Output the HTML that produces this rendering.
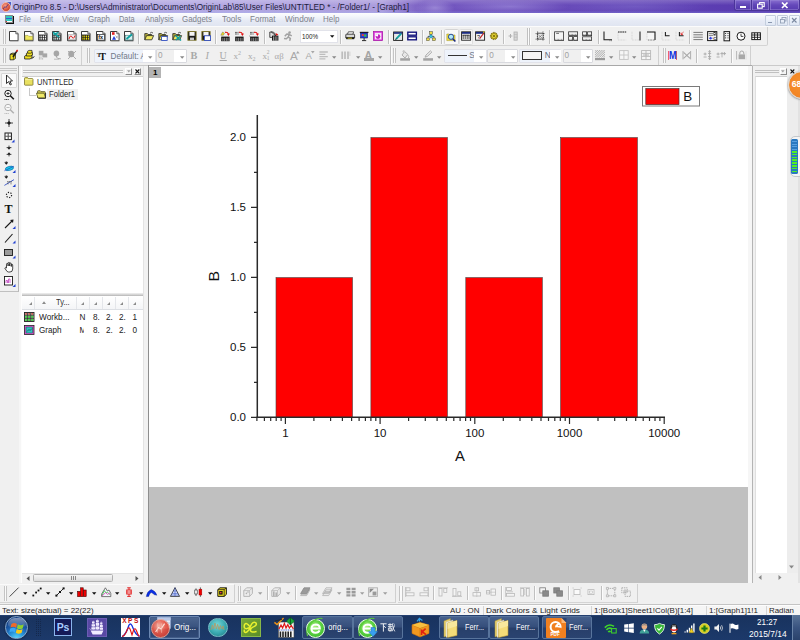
<!DOCTYPE html>
<html>
<head>
<meta charset="utf-8">
<title>OriginPro 8.5</title>
<style>
*{box-sizing:border-box;margin:0;padding:0}
html,body{width:800px;height:640px;overflow:hidden;background:#f0f0f0;font-family:"Liberation Sans",sans-serif;font-size:8px;color:#222}
.a{position:absolute}
.t{position:absolute;white-space:nowrap;transform-origin:0 0}
#title{left:0;top:0;width:800px;height:13px;background:linear-gradient(90deg,#7a66c6 0%,#7c66c8 30%,#7458c0 52%,#6a4cba 65%,#5e40b4 85%,#5636ac 100%)}
#menu{left:0;top:13px;width:800px;height:13.5px;background:linear-gradient(180deg,#fdfdfe 0%,#f4f6fb 25%,#e6eaf5 60%,#e0e5f1 100%);border-bottom:1px solid #cfd3dc}
.sep{position:absolute;width:1px;background:#c2c2c2}
svg{position:absolute;overflow:visible}
</style>
</head>
<body>
<div id="title" class="a"></div>
<div class="a" style="left:0px;top:0px;width:425px;height:13px;background:linear-gradient(90deg,rgba(225,222,248,0.6) 0%,rgba(225,222,248,0.5) 90%,rgba(225,222,248,0) 100%);"></div>
<div class="a" style="left:415px;top:0px;width:40px;height:13px;background:radial-gradient(ellipse at 50% 60%,rgba(200,190,240,0.45),rgba(200,190,240,0) 70%);"></div>
<div class="a" style="left:450px;top:0px;width:120px;height:13px;background:radial-gradient(ellipse at 50% 50%,rgba(190,180,240,0.4),rgba(200,190,240,0) 70%);"></div>
<div class="a" style="left:560px;top:0px;width:150px;height:13px;background:radial-gradient(ellipse at 50% 50%,rgba(150,140,220,0.3),rgba(200,190,240,0) 70%);"></div>
<div class="a" style="left:0px;top:0px;width:800px;height:13px;background:linear-gradient(180deg,rgba(255,255,255,0.22) 0%,rgba(255,255,255,0) 40%,rgba(255,255,255,0) 80%,rgba(160,190,255,0.25) 100%);"></div>
<div class="t" id="ttl" style="left:13px;top:2.2px;font-size:8.3px;line-height:10.3px;color:#1c1c3c;transform:scaleX(0.986);">OriginPro 8.5 - D:\Users\Administrator\Documents\OriginLab\85\User Files\UNTITLED * - /Folder1/ - [Graph1]</div>
<div class="a" style="left:5px;top:1px;width:7px;height:8px;background:#4a5ec8;border:1px solid #c8d0f0;"></div>
<div class="a" style="left:0.5px;top:1.5px;width:10px;height:10px;background:radial-gradient(circle at 40% 35%,#f8a088,#d85038 60%,#b03020);border-radius:5px;border:0.5px solid #f0b8a8;"></div>
<svg style="left:2px;top:3px;" width="7" height="7" viewBox="0 0 7 7"><path d="M1 6 L3 3.6 L4 4.6 L6 1.4" stroke="#503080" stroke-width="0.8" fill="none"/></svg>
<div class="a" style="left:733.5px;top:0px;width:18px;height:10.5px;background:linear-gradient(180deg,#8068cc,#5e44b6 50%,#5438ac);border:1px solid #4a3498;border-top:0;border-radius:0 0 0 3px;box-shadow:inset 0 0 0 0.6px #9a88d8;"></div>
<div class="a" style="left:751.5px;top:0px;width:18px;height:10.5px;background:linear-gradient(180deg,#8068cc,#5e44b6 50%,#5438ac);border:1px solid #4a3498;border-top:0;border-left:0;box-shadow:inset 0 0 0 0.6px #9a88d8;"></div>
<div class="a" style="left:769.5px;top:0px;width:30px;height:10.5px;background:linear-gradient(180deg,#8a70d0,#6448ba 50%,#583cb0);border:1px solid #4a3498;border-top:0;border-left:0;border-radius:0 0 3px 0;box-shadow:inset 0 0 0 0.6px #9a88d8;"></div>
<div class="a" style="left:739.5px;top:5.6px;width:6.5px;height:2px;background:#fff;"></div>
<svg style="left:756.5px;top:1.8px;" width="8" height="7" viewBox="0 0 8 7"><rect x="2.6" y="0.6" width="4.6" height="4" fill="none" stroke="#fff" stroke-width="1.1"/><rect x="0.6" y="2.2" width="4.6" height="4" fill="#6448ba" stroke="#fff" stroke-width="1.1"/></svg>
<svg style="left:780.5px;top:2px;" width="8" height="7" viewBox="0 0 8 7"><path d="M1 0.5 L6.5 6 M6.5 0.5 L1 6" stroke="#fff" stroke-width="1.7"/></svg>
<div id="menu" class="a"></div>
<div class="t" id="m_File" style="left:18.8px;top:15.2px;font-size:8.2px;line-height:10.2px;color:#7e828c;transform:scaleX(0.8862);">File</div>
<div class="t" id="m_Edit" style="left:40px;top:15.2px;font-size:8.2px;line-height:10.2px;color:#7e828c;transform:scaleX(0.9214);">Edit</div>
<div class="t" id="m_View" style="left:62px;top:15.2px;font-size:8.2px;line-height:10.2px;color:#7e828c;transform:scaleX(0.954);">View</div>
<div class="t" id="m_Graph" style="left:88px;top:15.2px;font-size:8.2px;line-height:10.2px;color:#7e828c;transform:scaleX(0.9664);">Graph</div>
<div class="t" id="m_Data" style="left:119.3px;top:15.2px;font-size:8.2px;line-height:10.2px;color:#7e828c;transform:scaleX(0.9077);">Data</div>
<div class="t" id="m_Analysis" style="left:144.5px;top:15.2px;font-size:8.2px;line-height:10.2px;color:#7e828c;transform:scaleX(0.9344);">Analysis</div>
<div class="t" id="m_Gadgets" style="left:182px;top:15.2px;font-size:8.2px;line-height:10.2px;color:#7e828c;transform:scaleX(0.9692);">Gadgets</div>
<div class="t" id="m_Tools" style="left:222px;top:15.2px;font-size:8.2px;line-height:10.2px;color:#7e828c;transform:scaleX(1.0092);">Tools</div>
<div class="t" id="m_Format" style="left:250px;top:15.2px;font-size:8.2px;line-height:10.2px;color:#7e828c;transform:scaleX(0.9831);">Format</div>
<div class="t" id="m_Window" style="left:284.5px;top:15.2px;font-size:8.2px;line-height:10.2px;color:#7e828c;transform:scaleX(1.006);">Window</div>
<div class="t" id="m_Help" style="left:322.5px;top:15.2px;font-size:8.2px;line-height:10.2px;color:#7e828c;transform:scaleX(0.9677);">Help</div>
<div class="a" style="left:5px;top:14.7px;width:8px;height:8px;background:#fff;border:0.6px solid #888;box-shadow:1px 1px 0 #111;"></div>
<div class="a" style="left:5.8px;top:15.8px;width:6.4px;height:2.2px;background:#30c8c0;"></div>
<div class="a" style="left:5.8px;top:19px;width:6.4px;height:2.4px;background:#30c8c0;"></div>
<div class="a" style="left:5.8px;top:18px;width:6.4px;height:1px;background:#3060d0;"></div>
<div class="a" style="left:5.8px;top:21.4px;width:1.6px;height:0.8px;background:#d03030;"></div>
<div class="a" style="left:765px;top:15px;width:11px;height:10.5px;background:linear-gradient(180deg,#f4f8fe,#dfe7f4);border:1px solid #c4cede;border-radius:1px;"></div>
<div class="a" style="left:777px;top:15px;width:11px;height:10.5px;background:linear-gradient(180deg,#f4f8fe,#dfe7f4);border:1px solid #c4cede;border-radius:1px;"></div>
<div class="a" style="left:789px;top:15px;width:11px;height:10.5px;background:linear-gradient(180deg,#f4f8fe,#dfe7f4);border:1px solid #c4cede;border-radius:1px;"></div>
<div class="a" style="left:768px;top:21.5px;width:4px;height:1.2px;background:#8a98b0;"></div>
<svg style="left:779.5px;top:17.3px;" width="7" height="7" viewBox="0 0 7 7"><rect x="2" y="0.5" width="4" height="3.5" fill="none" stroke="#8a98b0" stroke-width="0.8"/><rect x="0.5" y="2.5" width="4" height="3.5" fill="#e8eef8" stroke="#8a98b0" stroke-width="0.8"/></svg>
<svg style="left:791.3px;top:17.3px;" width="7" height="7" viewBox="0 0 7 7"><path d="M1 1 L5.5 5.5 M5.5 1 L1 5.5" stroke="#7a88a0" stroke-width="1.1"/></svg>
<div class="a" style="left:0px;top:26px;width:800px;height:1px;background:#fbfbfb;"></div>
<div class="a" style="left:0px;top:27px;width:767.5px;height:19px;background:#f0f0f0;border-right:1px solid #d0d0d0;border-bottom:1px solid #d4d4d4;border-radius:0 0 2px 0;"></div>
<div class="a" style="left:0px;top:46px;width:82px;height:19.5px;background:#f0f0f0;border-right:1px solid #d0d0d0;border-bottom:1px solid #d4d4d4;"></div>
<div class="a" style="left:84px;top:46px;width:307px;height:19.5px;background:#f0f0f0;border-right:1px solid #d0d0d0;border-bottom:1px solid #d4d4d4;"></div>
<div class="a" style="left:393px;top:46px;width:266px;height:19.5px;background:#f0f0f0;border-right:1px solid #d0d0d0;border-bottom:1px solid #d4d4d4;"></div>
<div class="a" style="left:661px;top:46px;width:90px;height:19.5px;background:#f0f0f0;border-right:1px solid #d0d0d0;border-bottom:1px solid #d4d4d4;"></div>
<div class="a" style="left:2.5px;top:29px;width:1px;height:15px;background:#c4c4c4;"></div>
<div class="a" style="left:5.0px;top:29px;width:1px;height:15px;background:#c4c4c4;"></div>
<div class="a" style="left:3.5px;top:29px;width:1.5px;height:15px;background:#fafafa;"></div>
<div class="a" style="left:2.5px;top:48px;width:1px;height:15px;background:#c4c4c4;"></div>
<div class="a" style="left:5.0px;top:48px;width:1px;height:15px;background:#c4c4c4;"></div>
<div class="a" style="left:3.5px;top:48px;width:1.5px;height:15px;background:#fafafa;"></div>
<svg style="left:8.8px;top:31.3px;" width="10" height="10" viewBox="0 0 10 10"><path d="M0.5 0.5 H6.8 L9.1 2.8 V9.7 H0.5 Z" fill="#fff" stroke="#1a1a1a" stroke-width="0.85"/><path d="M6.8 0.5 V2.8 H9.1" fill="#ddd" stroke="#1a1a1a" stroke-width="0.6"/><path d="M9.6 3.4 V10.1 H1.2" stroke="#9a9a9a" stroke-width="0.5" fill="none"/></svg>
<svg style="left:23.5px;top:31.3px;" width="10" height="10" viewBox="0 0 10 10"><path d="M0.5 0.5 H6.8 L9.1 2.8 V9.7 H0.5 Z" fill="#fff" stroke="#1a1a1a" stroke-width="0.85"/><path d="M6.8 0.5 V2.8 H9.1" fill="#ddd" stroke="#1a1a1a" stroke-width="0.6"/><path d="M9.6 3.4 V10.1 H1.2" stroke="#9a9a9a" stroke-width="0.5" fill="none"/><path d="M1.2 4.4 H4 L4.8 5.3 H8.6 V9 H1.2 Z" fill="#f0e860" stroke="#8a8420" stroke-width="0.5"/></svg>
<svg style="left:38px;top:31.3px;" width="10" height="10" viewBox="0 0 10 10"><path d="M0.5 0.5 H6.8 L9.1 2.8 V9.7 H0.5 Z" fill="#fff" stroke="#1a1a1a" stroke-width="0.85"/><path d="M6.8 0.5 V2.8 H9.1" fill="#ddd" stroke="#1a1a1a" stroke-width="0.6"/><path d="M9.6 3.4 V10.1 H1.2" stroke="#9a9a9a" stroke-width="0.5" fill="none"/><rect x="1" y="3.6" width="7.699999999999999" height="5.700000000000001" fill="#151515"/><rect x="1.45" y="4.50" width="1.05" height="1.75" fill="#fff"/><rect x="1.45" y="6.75" width="1.05" height="1.95" fill="#fff"/><rect x="3.25" y="4.50" width="1.05" height="1.75" fill="#fff"/><rect x="3.25" y="6.75" width="1.05" height="1.95" fill="#fff"/><rect x="5.05" y="4.50" width="1.05" height="1.75" fill="#fff"/><rect x="5.05" y="6.75" width="1.05" height="1.95" fill="#fff"/><rect x="6.85" y="4.50" width="1.05" height="1.75" fill="#fff"/><rect x="6.85" y="6.75" width="1.05" height="1.95" fill="#fff"/></svg>
<svg style="left:52.3px;top:31.3px;" width="10" height="10" viewBox="0 0 10 10"><path d="M0.5 0.5 H6.8 L9.1 2.8 V9.7 H0.5 Z" fill="#fff" stroke="#1a1a1a" stroke-width="0.85"/><path d="M6.8 0.5 V2.8 H9.1" fill="#ddd" stroke="#1a1a1a" stroke-width="0.6"/><path d="M9.6 3.4 V10.1 H1.2" stroke="#9a9a9a" stroke-width="0.5" fill="none"/><rect x="1" y="3.6" width="7.699999999999999" height="5.700000000000001" fill="#252525"/><rect x="1.45" y="4.50" width="1.05" height="1.75" fill="#d8eeee"/><rect x="1.45" y="6.75" width="1.05" height="1.95" fill="#d8eeee"/><rect x="3.25" y="4.50" width="1.05" height="1.75" fill="#d8eeee"/><rect x="3.25" y="6.75" width="1.05" height="1.95" fill="#d8eeee"/><rect x="5.05" y="4.50" width="1.05" height="1.75" fill="#d8eeee"/><rect x="5.05" y="6.75" width="1.05" height="1.95" fill="#d8eeee"/><rect x="6.85" y="4.50" width="1.05" height="1.75" fill="#d8eeee"/><rect x="6.85" y="6.75" width="1.05" height="1.95" fill="#d8eeee"/><path d="M1 1.2 L7 6.2 M1.5 3.5 L6.5 1.5" stroke="#10a0a0" stroke-width="1.6"/></svg>
<svg style="left:66.5px;top:31.3px;" width="10" height="10" viewBox="0 0 10 10"><path d="M0.5 0.5 H6.8 L9.1 2.8 V9.7 H0.5 Z" fill="#fff" stroke="#1a1a1a" stroke-width="0.85"/><path d="M6.8 0.5 V2.8 H9.1" fill="#ddd" stroke="#1a1a1a" stroke-width="0.6"/><path d="M9.6 3.4 V10.1 H1.2" stroke="#9a9a9a" stroke-width="0.5" fill="none"/><rect x="1.6" y="3.8" width="6.6" height="5" fill="#f0f0f0" stroke="#888" stroke-width="0.5"/><path d="M2 8 Q3.5 3 5 6 T8 4.5" stroke="#e02020" stroke-width="1" fill="none"/></svg>
<svg style="left:81px;top:31.3px;" width="10" height="10" viewBox="0 0 10 10"><path d="M0.5 0.5 H6.8 L9.1 2.8 V9.7 H0.5 Z" fill="#fff" stroke="#1a1a1a" stroke-width="0.85"/><path d="M6.8 0.5 V2.8 H9.1" fill="#ddd" stroke="#1a1a1a" stroke-width="0.6"/><path d="M9.6 3.4 V10.1 H1.2" stroke="#9a9a9a" stroke-width="0.5" fill="none"/><rect x="1" y="3.6" width="7.699999999999999" height="5.700000000000001" fill="#151515"/><rect x="1.45" y="4.50" width="1.05" height="1.75" fill="#f4e418"/><rect x="1.45" y="6.75" width="1.05" height="1.95" fill="#f4e418"/><rect x="3.25" y="4.50" width="1.05" height="1.75" fill="#f4e418"/><rect x="3.25" y="6.75" width="1.05" height="1.95" fill="#f4e418"/><rect x="5.05" y="4.50" width="1.05" height="1.75" fill="#f4e418"/><rect x="5.05" y="6.75" width="1.05" height="1.95" fill="#f4e418"/><rect x="6.85" y="4.50" width="1.05" height="1.75" fill="#f4e418"/><rect x="6.85" y="6.75" width="1.05" height="1.95" fill="#f4e418"/></svg>
<svg style="left:95.5px;top:31.3px;" width="10" height="10" viewBox="0 0 10 10"><path d="M0.5 0.5 H6.8 L9.1 2.8 V9.7 H0.5 Z" fill="#fff" stroke="#1a1a1a" stroke-width="0.85"/><path d="M6.8 0.5 V2.8 H9.1" fill="#ddd" stroke="#1a1a1a" stroke-width="0.6"/><path d="M9.6 3.4 V10.1 H1.2" stroke="#9a9a9a" stroke-width="0.5" fill="none"/><rect x="1.5" y="3.5" width="7" height="5.6" fill="#fff" stroke="#222" stroke-width="0.7"/><text x="2.2" y="8.3" font-size="5.5" font-weight="bold" font-family="Liberation Sans" fill="#111">fx</text></svg>
<svg style="left:110px;top:31.3px;" width="10" height="10" viewBox="0 0 10 10"><path d="M0.5 0.5 H6.8 L9.1 2.8 V9.7 H0.5 Z" fill="#fff" stroke="#1a1a1a" stroke-width="0.85"/><path d="M6.8 0.5 V2.8 H9.1" fill="#ddd" stroke="#1a1a1a" stroke-width="0.6"/><path d="M9.6 3.4 V10.1 H1.2" stroke="#9a9a9a" stroke-width="0.5" fill="none"/><rect x="2" y="1.2" width="2.6" height="2.6" fill="#e02020"/><path d="M2 8.8 L4 5 L6 8.8 Z" fill="#2040e0"/><path d="M5.5 4.5 L8 7.5 M8 4.5 L5.5 7.5" stroke="#888" stroke-width="0.6"/></svg>
<svg style="left:124.3px;top:31.3px;" width="10" height="10" viewBox="0 0 10 10"><path d="M0.5 0.5 H6.8 L9.1 2.8 V9.7 H0.5 Z" fill="#fff" stroke="#1a1a1a" stroke-width="0.85"/><path d="M6.8 0.5 V2.8 H9.1" fill="#ddd" stroke="#1a1a1a" stroke-width="0.6"/><path d="M9.6 3.4 V10.1 H1.2" stroke="#9a9a9a" stroke-width="0.5" fill="none"/><rect x="1.5" y="4.2" width="7" height="4.8" fill="#d8f0f0" stroke="#206060" stroke-width="0.5"/><path d="M2.5 8 L8 3.2" stroke="#10a0a0" stroke-width="1.8"/></svg>
<div class="a" style="left:138.2px;top:29.5px;width:1px;height:14px;background:#c0c0c0;"></div>
<div class="a" style="left:139.2px;top:29.5px;width:1px;height:14px;background:#fcfcfc;"></div>
<svg style="left:143.7px;top:31.3px;" width="10" height="10" viewBox="0 0 10 10"><path d="M0.8 8.8 V2.6 H3.4 L4.2 3.5 H7.6 V4.6" fill="#b8b040" stroke="#222" stroke-width="0.8"/><path d="M0.8 8.8 L2.6 4.6 H9.6 L7.8 8.8 Z" fill="#f0e860" stroke="#222" stroke-width="0.8"/><path d="M6 2.2 Q7.5 0.6 9 2" stroke="#222" stroke-width="0.7" fill="none"/></svg>
<svg style="left:158px;top:31.3px;" width="10" height="10" viewBox="0 0 10 10"><path d="M0.8 8.8 V2.6 H3.4 L4.2 3.5 H7.6 V4.6" fill="#b8b040" stroke="#222" stroke-width="0.8"/><path d="M0.8 8.8 L2.6 4.6 H9.6 L7.8 8.8 Z" fill="#f0e860" stroke="#222" stroke-width="0.8"/><path d="M6 2.2 Q7.5 0.6 9 2" stroke="#222" stroke-width="0.7" fill="none"/><rect x="3.6" y="5.6" width="5.6" height="3.8" fill="#fff" stroke="#2040c0" stroke-width="0.8"/></svg>
<svg style="left:172.3px;top:31.3px;" width="10" height="10" viewBox="0 0 10 10"><path d="M0.8 8.8 V2.6 H3.4 L4.2 3.5 H7.6 V4.6" fill="#b8b040" stroke="#222" stroke-width="0.8"/><path d="M0.8 8.8 L2.6 4.6 H9.6 L7.8 8.8 Z" fill="#f0e860" stroke="#222" stroke-width="0.8"/><path d="M6 2.2 Q7.5 0.6 9 2" stroke="#222" stroke-width="0.7" fill="none"/><path d="M3.5 4.5 L9 9.5 M4 9 L8.5 5" stroke="#10a0a0" stroke-width="1.6"/></svg>
<svg style="left:187px;top:31.3px;" width="10" height="10" viewBox="0 0 10 10"><rect x="0.9" y="0.6" width="8.2" height="8.6" fill="#1a1a1a" stroke="#7a7020" stroke-width="0.9"/><rect x="2.4" y="1" width="5.2" height="3.8" fill="#f4f4f4"/><rect x="3" y="6.6" width="4" height="2.6" fill="#c8c8c8"/></svg>
<svg style="left:201px;top:31.3px;" width="10" height="10" viewBox="0 0 10 10"><rect x="0.9" y="0.6" width="8.2" height="8.6" fill="#1a1a1a" stroke="#7a7020" stroke-width="0.9"/><rect x="2.4" y="1" width="5.2" height="3.8" fill="#f4f4f4"/><rect x="3" y="6.6" width="4" height="2.6" fill="#c8c8c8"/><rect x="3.4" y="4.8" width="6.2" height="4.6" fill="#fff" stroke="#2040c0" stroke-width="0.8"/></svg>
<div class="a" style="left:215.3px;top:29.5px;width:1px;height:14px;background:#c0c0c0;"></div>
<div class="a" style="left:216.3px;top:29.5px;width:1px;height:14px;background:#fcfcfc;"></div>
<svg style="left:220px;top:31.3px;" width="10" height="10" viewBox="0 0 10 10"><path d="M0.8 4.2 L2.6 1 L4.4 2.2 L3.4 4.2Z" fill="#f0e020" stroke="#555" stroke-width="0.4"/><path d="M5 1.4 Q7.6 0.8 8.4 3" stroke="#e01010" stroke-width="1.1" fill="none"/><path d="M10 2.6 L8.4 5 L7 2.8 Z" fill="#e01010"/><rect x="1.2" y="5.6" width="8.4" height="4.6" fill="#151515"/><path d="M2.9 6.8 V10.2 M4.6 6.8 V10.2 M6.3 6.8 V10.2 M8 6.8 V10.2" stroke="#e8e8e8" stroke-width="0.55"/></svg>
<svg style="left:234.3px;top:31.3px;" width="10" height="10" viewBox="0 0 10 10"><path d="M1 1.4 H5 M1 3 H5" stroke="#222" stroke-width="0.9" stroke-dasharray="0.8 0.5"/><path d="M5 1.4 Q7.6 0.8 8.4 3" stroke="#e01010" stroke-width="1.1" fill="none"/><path d="M10 2.6 L8.4 5 L7 2.8 Z" fill="#e01010"/><rect x="1.2" y="5.6" width="8.4" height="4.6" fill="#151515"/><path d="M2.9 6.8 V10.2 M4.6 6.8 V10.2 M6.3 6.8 V10.2 M8 6.8 V10.2" stroke="#e8e8e8" stroke-width="0.55"/></svg>
<svg style="left:248.6px;top:31.3px;" width="10" height="10" viewBox="0 0 10 10"><path d="M1 1.4 H5 M1 3 H5" stroke="#222" stroke-width="0.9" stroke-dasharray="0.8 0.5"/><path d="M0.5 4.5 L3 9.5" stroke="#888" stroke-width="0.7"/><path d="M5 1.4 Q7.6 0.8 8.4 3" stroke="#e01010" stroke-width="1.1" fill="none"/><path d="M10 2.6 L8.4 5 L7 2.8 Z" fill="#e01010"/><rect x="1.2" y="5.6" width="8.4" height="4.6" fill="#151515"/><path d="M2.9 6.8 V10.2 M4.6 6.8 V10.2 M6.3 6.8 V10.2 M8 6.8 V10.2" stroke="#e8e8e8" stroke-width="0.55"/></svg>
<div class="a" style="left:263.5px;top:29.5px;width:1px;height:14px;background:#c0c0c0;"></div>
<div class="a" style="left:264.5px;top:29.5px;width:1px;height:14px;background:#fcfcfc;"></div>
<svg style="left:268.8px;top:31.3px;" width="10" height="10" viewBox="0 0 10 10"><path d="M0.8 1 H4.4 L6.2 3 V6.4 H0.8Z" fill="#e0e0e0" stroke="#222" stroke-width="0.8"/><path d="M2 0.6 L7 5" stroke="#222" stroke-width="0.8"/><rect x="3" y="4.6" width="6.4" height="5" fill="#1a1a1a"/><path d="M4.5 5.4 V9.6 M6.2 5.4 V9.6 M7.9 5.4 V9.6" stroke="#e8e8e8" stroke-width="0.6"/><path d="M6.6 2 L9.4 3.6 L7 4.8Z" fill="#e01010"/></svg>
<svg style="left:283px;top:31.3px;" width="10" height="10" viewBox="0 0 10 10"><circle cx="6.6" cy="1.5" r="1.3" fill="#a2a2a2"/><path d="M3 3.2 L6.2 3 L5.2 6.2 L7.4 7.4 L6.6 9.8 M5.2 6 L3.4 7.8 L1 7.4 M6 3.4 L8.8 4.8 M3.6 3.2 L1.8 5.2" stroke="#a2a2a2" stroke-width="1.5" fill="none" stroke-linejoin="round"/></svg>
<div class="a" style="left:299.5px;top:30px;width:38px;height:12.5px;background:#fff;border:1px solid #e2e3ea;"></div>
<div class="t" id="t_100" style="left:302px;top:31.6px;font-size:8px;line-height:10px;color:#222;transform:scaleX(0.7817);">100%</div>
<svg style="left:329.5px;top:35.3px;" width="4" height="3" viewBox="0 0 4 3"><path d="M0 0.2 H4.4 L2.2 2.8 Z" fill="#111"/></svg>
<div class="a" style="left:340.3px;top:29.5px;width:1px;height:14px;background:#c0c0c0;"></div>
<div class="a" style="left:341.3px;top:29.5px;width:1px;height:14px;background:#fcfcfc;"></div>
<svg style="left:344.8px;top:31.3px;" width="10" height="10" viewBox="0 0 10 10"><path d="M2.4 3.4 L3.4 0.8 H8.6 L7.8 3.4" fill="#fff" stroke="#222" stroke-width="0.7"/><path d="M0.8 3.8 Q0.8 3.2 1.4 3.2 H8.8 Q9.6 3.2 9.6 3.8 V7 H0.8Z" fill="#d8d8d8" stroke="#1a1a1a" stroke-width="0.8"/><rect x="1.2" y="6.2" width="8" height="2" fill="#1a1a1a"/><path d="M2.6 7.2 H7" stroke="#f0e020" stroke-width="0.8"/></svg>
<svg style="left:359px;top:31.3px;" width="10" height="10" viewBox="0 0 10 10"><rect x="0.8" y="0.8" width="8.6" height="1.2" fill="#1a1a1a"/><rect x="1.6" y="2" width="7" height="5" fill="#2040e0" stroke="#1a1a60" stroke-width="0.6"/><rect x="2.8" y="3" width="2" height="2" fill="#e04040"/><rect x="5.2" y="3.4" width="2.2" height="2.4" fill="#40c040"/><path d="M5.1 7 V9.4 M3 9.6 H7.2" stroke="#1a1a1a" stroke-width="0.9"/></svg>
<svg style="left:373.3px;top:31.3px;" width="10" height="10" viewBox="0 0 10 10"><rect x="0.6" y="0.6" width="9" height="9" fill="#e030e0" stroke="#a010a0" stroke-width="0.7"/><rect x="1.8" y="1.8" width="6.6" height="6.6" fill="#f4e8f4"/><circle cx="5" cy="5.6" r="2.3" fill="#c020c0"/><path d="M5 5.6 L5 3 A2.6 2.6 0 0 0 2.6 5Z" fill="#fff"/></svg>
<div class="a" style="left:387.5px;top:29.5px;width:1px;height:14px;background:#c0c0c0;"></div>
<div class="a" style="left:388.5px;top:29.5px;width:1px;height:14px;background:#fcfcfc;"></div>
<svg style="left:392.5px;top:31.3px;" width="10" height="10" viewBox="0 0 10 10"><rect x="0.6" y="1" width="9" height="8.4" fill="#e8e8e8" stroke="#1a1a1a" stroke-width="0.9"/><rect x="1" y="1.2" width="8.2" height="1.6" fill="#1a2a80"/><path d="M3 8.2 L8.2 2.6" stroke="#10a0a0" stroke-width="1.8"/><path d="M2.4 8.8 L3.6 7.6" stroke="#222" stroke-width="1"/></svg>
<svg style="left:407px;top:31.3px;" width="10" height="10" viewBox="0 0 10 10"><rect x="0.8" y="1.2" width="8.6" height="3" fill="#fff" stroke="#10107a" stroke-width="1.35"/><rect x="0.8" y="5.8" width="8.6" height="3" fill="#fff" stroke="#10107a" stroke-width="1.35"/></svg>
<div class="a" style="left:422.3px;top:29.5px;width:1px;height:14px;background:#c0c0c0;"></div>
<div class="a" style="left:423.3px;top:29.5px;width:1px;height:14px;background:#fcfcfc;"></div>
<svg style="left:426.3px;top:31.3px;" width="10" height="10" viewBox="0 0 10 10"><path d="M5 3 V5 M2 7 V5.4 H8 V7" stroke="#222" stroke-width="0.7" fill="none"/><rect x="3.6" y="0.6" width="2.8" height="2.6" fill="#f0e040" stroke="#444" stroke-width="0.5"/><path d="M5 3.6 L7 5.4 L5 7.2 L3 5.4Z" fill="#30c8e0" stroke="#206080" stroke-width="0.5"/><rect x="0.6" y="7" width="2.8" height="2.6" fill="#f0e040" stroke="#444" stroke-width="0.5"/><rect x="6.6" y="7" width="2.8" height="2.6" fill="#f0e040" stroke="#444" stroke-width="0.5"/></svg>
<div class="a" style="left:441px;top:29.5px;width:1px;height:14px;background:#c0c0c0;"></div>
<div class="a" style="left:442px;top:29.5px;width:1px;height:14px;background:#fcfcfc;"></div>
<div class="a" style="left:443.5px;top:28.5px;width:15px;height:16px;background:#f8f8f8;border:1px solid #d4d4d4;border-radius:1.5px;"></div>
<div class="a" style="left:459px;top:28.5px;width:14px;height:16px;background:#f6f6f6;border:1px solid #dedede;border-radius:1.5px;"></div>
<svg style="left:446px;top:31.8px;" width="10" height="10" viewBox="0 0 10 10"><path d="M0.8 2 H3.2 L4 3 H9 V8.6 H0.8Z" fill="#f0e040" stroke="#a09020" stroke-width="0.5"/><circle cx="5" cy="4.8" r="2.6" fill="#b0e8f8" stroke="#1a3a90" stroke-width="0.9"/><path d="M6.8 6.8 L9.4 9.6" stroke="#1a2a80" stroke-width="1.5"/></svg>
<svg style="left:461px;top:31.3px;" width="10" height="10" viewBox="0 0 10 10"><rect x="0.6" y="0.8" width="9" height="8.4" fill="#f4f4f4" stroke="#1a1a1a" stroke-width="0.9"/><rect x="1" y="1" width="8.2" height="1.8" fill="#1a2a80"/><path d="M2.2 4 V8 M4.2 4 V8 M6.2 4 V8 M8 4 V8 M1.5 4.2 H8.6" stroke="#222" stroke-width="0.8"/></svg>
<svg style="left:474.5px;top:31.3px;" width="10" height="10" viewBox="0 0 10 10"><rect x="0.6" y="0.8" width="9" height="8.4" fill="#f4f4f4" stroke="#1a1a1a" stroke-width="0.9"/><rect x="1" y="1" width="8.2" height="1.8" fill="#1a2a80"/><text x="2" y="8.2" font-size="5.5" font-family="Liberation Sans" fill="#111">?</text><path d="M4.6 7.6 L8.8 2.2" stroke="#c02020" stroke-width="1.1"/><path d="M8.2 1.6 L9.6 0.6" stroke="#e0c020" stroke-width="1.2"/></svg>
<svg style="left:489px;top:31.3px;" width="10" height="10" viewBox="0 0 10 10"><circle cx="5" cy="5" r="3.6" fill="#d8c828" stroke="#5a5010" stroke-width="0.9" stroke-dasharray="1.6 1"/><circle cx="5" cy="5" r="2.7" fill="#e0d030" stroke="#7a6a10" stroke-width="0.6"/><circle cx="5" cy="5" r="1.1" fill="#7a6a10"/></svg>
<div class="a" style="left:503px;top:29.5px;width:1px;height:14px;background:#c0c0c0;"></div>
<div class="a" style="left:504px;top:29.5px;width:1px;height:14px;background:#fcfcfc;"></div>
<svg style="left:507.5px;top:31.3px;" width="10" height="10" viewBox="0 0 10 10"><path d="M0.6 5 H4.4 M2.5 3 V7" stroke="#b0b0b0" stroke-width="1"/><rect x="6" y="1" width="3.2" height="8.2" fill="#d8d8d8" stroke="#b0b0b0" stroke-width="0.8"/><path d="M6 3.6 H9.2 M6 6.2 H9.2" stroke="#b0b0b0" stroke-width="0.6"/></svg>
<div class="a" style="left:526.8px;top:28px;width:1px;height:17px;background:#c0c0c0;"></div>
<div class="a" style="left:527.8px;top:28px;width:1px;height:17px;background:#fcfcfc;"></div>
<div class="a" style="left:529.3px;top:28px;width:1px;height:17px;background:#c0c0c0;"></div>
<div class="a" style="left:530.3px;top:28px;width:1px;height:17px;background:#fcfcfc;"></div>
<svg style="left:534.5px;top:31.3px;" width="10" height="10" viewBox="0 0 10 10"><rect x="2.4" y="2" width="6" height="6" fill="none" stroke="#333" stroke-width="0.8" stroke-dasharray="1.2 0.8"/><path d="M0.4 2.6 H9.8 M0.4 8.2 H9.8 M2.6 0.2 V9.8 M8 0.2 V9.8" stroke="#333" stroke-width="0.5"/><path d="M3.5 4 L7 7 M7 4 L3.5 7" stroke="#555" stroke-width="0.6"/></svg>
<div class="a" style="left:549px;top:29.5px;width:1px;height:14px;background:#c0c0c0;"></div>
<div class="a" style="left:550px;top:29.5px;width:1px;height:14px;background:#fcfcfc;"></div>
<svg style="left:553.5px;top:31.3px;" width="10" height="10" viewBox="0 0 10 10"><rect x="0.6" y="0.8" width="9" height="8.6" fill="#f4f4f4" stroke="#333" stroke-width="0.8"/><path d="M1.4 8.4 H8.799999999999999" stroke="#333" stroke-width="0.6" stroke-dasharray="0.8 0.6"/><path d="M2.2 2.4 H5" stroke="#333" stroke-width="0.7"/></svg>
<svg style="left:568px;top:31.3px;" width="10" height="10" viewBox="0 0 10 10"><rect x="0.6" y="0.8" width="9" height="3.6" fill="#f4f4f4" stroke="#333" stroke-width="0.8"/><path d="M1.4 3.4000000000000004 H8.799999999999999" stroke="#333" stroke-width="0.6" stroke-dasharray="0.8 0.6"/><rect x="0.6" y="5.6" width="4" height="3.8" fill="#f4f4f4" stroke="#333" stroke-width="0.8"/><path d="M1.4 8.399999999999999 H3.8" stroke="#333" stroke-width="0.6" stroke-dasharray="0.8 0.6"/><rect x="5.6" y="5.6" width="4" height="3.8" fill="#f4f4f4" stroke="#333" stroke-width="0.8"/><path d="M6.3999999999999995 8.399999999999999 H8.799999999999999" stroke="#333" stroke-width="0.6" stroke-dasharray="0.8 0.6"/></svg>
<svg style="left:582.3px;top:31.3px;" width="10" height="10" viewBox="0 0 10 10"><rect x="0.6" y="0.8" width="4" height="3.8" fill="#f4f4f4" stroke="#333" stroke-width="0.8"/><path d="M1.4 3.5999999999999996 H3.8" stroke="#333" stroke-width="0.6" stroke-dasharray="0.8 0.6"/><rect x="5.6" y="0.8" width="4" height="3.8" fill="#f4f4f4" stroke="#333" stroke-width="0.8"/><path d="M6.3999999999999995 3.5999999999999996 H8.799999999999999" stroke="#333" stroke-width="0.6" stroke-dasharray="0.8 0.6"/><rect x="0.6" y="5.8" width="9" height="3.6" fill="#f4f4f4" stroke="#333" stroke-width="0.8"/><path d="M1.4 8.4 H8.799999999999999" stroke="#333" stroke-width="0.6" stroke-dasharray="0.8 0.6"/></svg>
<div class="a" style="left:597.5px;top:29.5px;width:1px;height:14px;background:#c0c0c0;"></div>
<div class="a" style="left:598.5px;top:29.5px;width:1px;height:14px;background:#fcfcfc;"></div>
<svg style="left:602.5px;top:31.3px;" width="10" height="10" viewBox="0 0 10 10"><path d="M1 0.6 V8.8 H9" stroke="#1a1a1a" stroke-width="1.05" fill="none"/><path d="M6.6 9.7 h2.6" stroke="#1a1a1a" stroke-width="0.6" stroke-dasharray="0.7 0.7"/></svg>
<svg style="left:617px;top:31.3px;" width="10" height="10" viewBox="0 0 10 10"><path d="M1 1 V9 H9.2" stroke="#cfcfcf" stroke-width="0.9" fill="none" stroke-dasharray="0.9 0.7"/><path d="M1 1 H9.2" stroke="#1a1a1a" stroke-width="1.05" stroke-dasharray="1.6 0.6"/></svg>
<svg style="left:631.3px;top:31.3px;" width="10" height="10" viewBox="0 0 10 10"><path d="M1 0.8 V9 H9" stroke="#cfcfcf" stroke-width="0.9" fill="none" stroke-dasharray="0.9 0.7"/><path d="M9 0.6 V9.4" stroke="#1a1a1a" stroke-width="1.05"/></svg>
<svg style="left:646px;top:31.3px;" width="10" height="10" viewBox="0 0 10 10"><rect x="1" y="1" width="8" height="8" fill="#f6f6f6" stroke="#cfcfcf" stroke-width="0.9" stroke-dasharray="0.9 0.7"/><path d="M1 1 H9 V9" stroke="#1a1a1a" stroke-width="1.05" fill="none"/><path d="M2.2 9 H9" stroke="#555" stroke-width="0.8" stroke-dasharray="0.8 0.8"/></svg>
<svg style="left:660.5px;top:31.3px;" width="10" height="10" viewBox="0 0 10 10"><path d="M1 0.8 V9 H9.2" stroke="#cfcfcf" stroke-width="0.9" fill="none" stroke-dasharray="0.9 0.7"/><path d="M4.4 1 V4.8 H8.6" stroke="#1a1a1a" stroke-width="1.05" fill="none"/></svg>
<svg style="left:675px;top:31.3px;" width="10" height="10" viewBox="0 0 10 10"><path d="M1 0.8 V9 H9.2" stroke="#cfcfcf" stroke-width="0.9" fill="none" stroke-dasharray="0.9 0.7"/><path d="M4.4 1 V4.8 H8.6" stroke="#1a1a1a" stroke-width="1.05" fill="none"/><path d="M8.6 1 L6 3.4 M6 1.6 V3.6 H8" stroke="#e01010" stroke-width="0.7" fill="none"/></svg>
<div class="a" style="left:689px;top:29.5px;width:1px;height:14px;background:#c0c0c0;"></div>
<div class="a" style="left:690px;top:29.5px;width:1px;height:14px;background:#fcfcfc;"></div>
<svg style="left:693.3px;top:31.3px;" width="10" height="10" viewBox="0 0 10 10"><path d="M0.4 1.4 H9.8 M0.4 3.8 H9.8 M0.4 6.2 H9.8 M0.4 8.6 H9.8" stroke="#7a7a7a" stroke-width="1"/></svg>
<svg style="left:707.3px;top:31.3px;" width="10" height="10" viewBox="0 0 10 10"><rect x="0.6" y="0.6" width="9.2" height="9" fill="#f4f4f4" stroke="#1a1a1a" stroke-width="1"/><path d="M1.8 2.6 H6 M1.8 4.4 H6" stroke="#555" stroke-width="0.7"/><rect x="6.8" y="1.6" width="1.8" height="2.6" fill="none" stroke="#333" stroke-width="0.6"/><path d="M2 7.2 H5.4 M3.7 5.8 V8.6" stroke="#2030e0" stroke-width="1"/><text x="6.2" y="9" font-size="4.4" font-weight="bold" font-family="Liberation Sans" fill="#111">C</text></svg>
<svg style="left:721.5px;top:31.3px;" width="10" height="10" viewBox="0 0 10 10"><rect x="2" y="0.6" width="5.6" height="9.2" fill="#f4f4f4" stroke="#1a1a1a" stroke-width="1"/><path d="M3.6 2 V8.4 M6 2 V8.4" stroke="#1a1a1a" stroke-width="0.9" stroke-dasharray="1 1.2"/></svg>
<svg style="left:736px;top:31.3px;" width="10" height="10" viewBox="0 0 10 10"><circle cx="5" cy="5.2" r="4" fill="#fff" stroke="#1a1a1a" stroke-width="1"/><path d="M5 2.6 V5.4 H7.4" stroke="#1a1a1a" stroke-width="0.8" fill="none"/></svg>
<svg style="left:750.5px;top:31.3px;" width="10" height="10" viewBox="0 0 10 10"><rect x="0.8" y="1.8" width="8.6" height="6.8" fill="#fff" stroke="#1a1a1a" stroke-width="1"/><path d="M0.8 4 H9.4 M0.8 6.3 H9.4 M3.6 1.8 V8.6 M6.5 1.8 V8.6" stroke="#1a1a1a" stroke-width="0.9"/></svg>
<svg style="left:9px;top:50.2px;" width="10" height="10" viewBox="0 0 10 10"><path d="M1 4.4 L3 3.2 H6.4 V8.6 L4.4 9.8 H1Z" fill="#f0e020" stroke="#1a1a1a" stroke-width="0.8"/><path d="M1 4.4 H4.4 V9.8 M4.4 4.4 L6.4 3.2" stroke="#1a1a1a" stroke-width="0.6" fill="none"/><path d="M4 7 L8 0.8" stroke="#1a1a1a" stroke-width="1.5"/><path d="M7.4 1.6 L8.6 0" stroke="#e01010" stroke-width="1.4"/></svg>
<svg style="left:23.5px;top:50.2px;" width="10" height="10" viewBox="0 0 10 10"><path d="M0.6 6.2 L2.6 5 H8 V7.6 L6 9 H0.6Z" fill="#f0e020" stroke="#1a1a1a" stroke-width="0.8"/><path d="M2.4 3.4 L4 2.4 H8.4 V5 L6.8 6 H2.4Z" fill="#f0e020" stroke="#1a1a1a" stroke-width="0.8"/><path d="M3.6 1.2 L5 0.4 H8 V2.4 L6.8 3.2 H3.6Z" fill="#f0e020" stroke="#1a1a1a" stroke-width="0.7"/><path d="M7.5 8.6 L10.4 6.6" stroke="#1a1a1a" stroke-width="1"/></svg>
<svg style="left:38px;top:50.2px;" width="10" height="10" viewBox="0 0 10 10"><rect x="0.8" y="0.8" width="4.6" height="4.6" fill="#a6a6a6"/><rect x="4.4" y="3.4" width="4.8" height="4" fill="#a6a6a6"/><path d="M1.4 6.4 V9.6 M3 6.4 V9.6 M4.6 8 V9.6" stroke="#a6a6a6" stroke-width="0.7"/></svg>
<svg style="left:52.3px;top:50.2px;" width="10" height="10" viewBox="0 0 10 10"><ellipse cx="4.4" cy="3.4" rx="2.8" ry="3" fill="#a6a6a6"/><path d="M4.4 6 Q4.4 9 8.8 8.8" stroke="#a6a6a6" stroke-width="1" fill="none"/><path d="M2 9.2 H7" stroke="#a6a6a6" stroke-width="0.7"/></svg>
<svg style="left:66.5px;top:50.2px;" width="10" height="10" viewBox="0 0 10 10"><ellipse cx="4.2" cy="4" rx="3" ry="3.2" fill="#a6a6a6"/><path d="M1 1 L9 9 M9 1 L1 9" stroke="#a6a6a6" stroke-width="0.9"/></svg>
<div class="a" style="left:86.5px;top:48px;width:1px;height:15px;background:#c4c4c4;"></div>
<div class="a" style="left:89.0px;top:48px;width:1px;height:15px;background:#c4c4c4;"></div>
<div class="a" style="left:87.5px;top:48px;width:1.5px;height:15px;background:#fafafa;"></div>
<div class="a" style="left:93.5px;top:49px;width:62px;height:14px;background:#fff;border:1px solid #e2e3ea;border-radius:1px;"></div>
<div class="a" style="left:94.5px;top:50px;width:49px;height:12px;background:#eef3fb;"></div>
<div class="t" style="left:99.6px;top:50.8px;font-family:'Liberation Serif',serif;font-weight:bold;font-size:9.6px;line-height:11px;color:#111">T</div>
<div class="t" style="left:96.8px;top:49.6px;font-family:'Liberation Serif',serif;font-weight:bold;font-size:7px;line-height:11px;color:#333">T</div>
<div class="t" id="t_def" style="left:110.5px;top:51.5px;font-size:8.2px;line-height:10.2px;color:#707888;">Default: A</div>
<div class="a" style="left:143.2px;top:50px;width:11.6px;height:12px;background:#fff;"></div>
<svg style="left:148px;top:55.5px;" width="4" height="3" viewBox="0 0 4 3"><path d="M0 0.2 H4.4 L2.2 2.8 Z" fill="#8a8a8a"/></svg>
<div class="a" style="left:156px;top:49px;width:30.5px;height:14px;background:#fff;border:1px solid #d8d9de;border-radius:1px;"></div>
<div class="a" style="left:157px;top:50px;width:17px;height:12px;background:#f0f0f0;"></div>
<div class="t" style="left:158px;top:51.3px;font-size:8.2px;line-height:10.2px;color:#a0a0a0;">0</div>
<svg style="left:179.5px;top:55.5px;" width="4" height="3" viewBox="0 0 4 3"><path d="M0 0.2 H4.4 L2.2 2.8 Z" fill="#8a8a8a"/></svg>
<div class="t" style="left:190.6px;top:51px;font-family:'Liberation Serif',serif;font-size:10.3px;line-height:10.3px;color:#a8a8a8;font-weight:bold;">B</div>
<div class="t" style="left:205.6px;top:51px;font-family:'Liberation Serif',serif;font-size:10.3px;line-height:10.3px;color:#a8a8a8;font-style:italic;">I</div>
<div class="t" style="left:219.6px;top:51px;font-family:'Liberation Serif',serif;font-size:10px;line-height:10px;color:#a8a8a8;text-decoration:underline;">U</div>
<div class="t" style="left:233.6px;top:52px;font-family:'Liberation Serif',serif;font-size:9px;line-height:9px;color:#a8a8a8;">x</div>
<div class="t" style="left:238px;top:50.3px;font-family:'Liberation Serif',serif;font-size:6px;line-height:6px;color:#a8a8a8;">2</div>
<div class="t" style="left:248px;top:52px;font-family:'Liberation Serif',serif;font-size:9px;line-height:9px;color:#a8a8a8;">x</div>
<div class="t" style="left:252.4px;top:56px;font-family:'Liberation Serif',serif;font-size:6px;line-height:6px;color:#a8a8a8;">2</div>
<div class="t" style="left:262.4px;top:52px;font-family:'Liberation Serif',serif;font-size:9px;line-height:9px;color:#a8a8a8;">x</div>
<div class="t" style="left:266.8px;top:50px;font-family:'Liberation Serif',serif;font-size:5.5px;line-height:5.5px;color:#a8a8a8;">2</div>
<div class="t" style="left:266.8px;top:55.6px;font-family:'Liberation Serif',serif;font-size:5.5px;line-height:5.5px;color:#a8a8a8;">1</div>
<div class="t" style="left:274.6px;top:52.3px;font-family:'Liberation Serif',serif;font-size:8.8px;line-height:8.8px;color:#a8a8a8;">αβ</div>
<div class="t" style="left:290px;top:50.3px;font-size:11.6px;line-height:12px;color:#a8a8a8">A</div>
<svg style="left:296.3px;top:51px;" width="4" height="3" viewBox="0 0 4 3"><path d="M0 2.6 H3.6 L1.8 0 Z" fill="#a8a8a8"/></svg>
<div class="t" style="left:305.5px;top:50.8px;font-size:9.5px;line-height:10px;color:#a8a8a8">A</div>
<svg style="left:310.8px;top:50.6px;" width="4" height="3" viewBox="0 0 4 3"><path d="M0 0 H3.6 L1.8 2.4 Z" fill="#a8a8a8"/></svg>
<svg style="left:318.8px;top:50.2px;" width="10" height="10" viewBox="0 0 10 10"><path d="M0.4 2 H8.8 M0.4 4.3 H6.4 M0.4 6.6 H8.8 M0.4 8.9 H6.4" stroke="#bdbdbd" stroke-width="1.3"/></svg>
<svg style="left:332px;top:55.5px;" width="4" height="3" viewBox="0 0 4 3"><path d="M0 0.2 H4.4 L2.2 2.8 Z" fill="#8a8a8a"/></svg>
<svg style="left:341px;top:50.2px;" width="10" height="10" viewBox="0 0 10 10"><path d="M1.2 1.6 V9 M4 1.6 V9 M7 1.6 V9" stroke="#bdbdbd" stroke-width="1.7"/><path d="M8.9 1.6 V6" stroke="#cfcfcf" stroke-width="0.9"/></svg>
<svg style="left:355.5px;top:55.5px;" width="4" height="3" viewBox="0 0 4 3"><path d="M0 0.2 H4.4 L2.2 2.8 Z" fill="#8a8a8a"/></svg>
<div class="t" style="left:364.6px;top:48.8px;font-size:10.6px;line-height:12px;font-weight:bold;color:#a4a4a4">A</div>
<div class="a" style="left:363.6px;top:58.4px;width:10.2px;height:2.6px;background:#a6a6a6;"></div>
<svg style="left:378px;top:55.5px;" width="4" height="3" viewBox="0 0 4 3"><path d="M0 0.2 H4.4 L2.2 2.8 Z" fill="#8a8a8a"/></svg>
<div class="a" style="left:389.5px;top:47px;width:1px;height:17px;background:#c0c0c0;"></div>
<div class="a" style="left:390.5px;top:47px;width:1px;height:17px;background:#fcfcfc;"></div>
<div class="a" style="left:392.8px;top:48px;width:1px;height:15px;background:#c4c4c4;"></div>
<div class="a" style="left:395.3px;top:48px;width:1px;height:15px;background:#c4c4c4;"></div>
<div class="a" style="left:393.8px;top:48px;width:1.5px;height:15px;background:#fafafa;"></div>
<svg style="left:400px;top:49.7px;" width="10" height="10" viewBox="0 0 10 10"><path d="M2 5 L4.6 1.6 L7.8 4.4 L5 8Z" fill="#e8e8e8" stroke="#a8a8a8" stroke-width="0.9"/><path d="M3.4 2.4 Q2 0.4 4.4 0.6" stroke="#a8a8a8" stroke-width="0.7" fill="none"/><path d="M8 5 Q9.4 7 8.4 8" stroke="#a8a8a8" stroke-width="0.8" fill="none"/><rect x="0.2" y="8.2" width="9.8" height="2.5" fill="#a2a2a2"/></svg>
<svg style="left:414px;top:55.5px;" width="4" height="3" viewBox="0 0 4 3"><path d="M0 0.2 H4.4 L2.2 2.8 Z" fill="#8a8a8a"/></svg>
<svg style="left:422.8px;top:49.7px;" width="10" height="10" viewBox="0 0 10 10"><path d="M2 7.2 L3 5 L7.4 0.8 L8.8 2.2 L4.4 6.4Z" fill="#e8e8e8" stroke="#a8a8a8" stroke-width="0.9"/><rect x="0.2" y="8.2" width="9.8" height="2.5" fill="#a2a2a2"/></svg>
<svg style="left:437px;top:55.5px;" width="4" height="3" viewBox="0 0 4 3"><path d="M0 0.2 H4.4 L2.2 2.8 Z" fill="#8a8a8a"/></svg>
<div class="a" style="left:443.5px;top:48.5px;width:43px;height:14.5px;background:#fff;border:1px solid #e2e3ea;border-radius:1px;"></div>
<div class="a" style="left:444.5px;top:49.5px;width:30px;height:12.5px;background:#eef3fb;"></div>
<div class="a" style="left:447.5px;top:55.3px;width:19px;height:1px;background:#333;"></div>
<div class="t" style="left:469.3px;top:51.2px;font-size:8.2px;line-height:10.2px;color:#707888;">S</div>
<div class="a" style="left:474px;top:49.5px;width:11.5px;height:12.5px;background:#fff;"></div>
<svg style="left:478.5px;top:55.5px;" width="4" height="3" viewBox="0 0 4 3"><path d="M0 0.2 H4.4 L2.2 2.8 Z" fill="#8a8a8a"/></svg>
<div class="a" style="left:487.3px;top:48.5px;width:30.5px;height:14.5px;background:#fff;border:1px solid #d8d9de;border-radius:1px;"></div>
<div class="a" style="left:488.3px;top:49.5px;width:17px;height:12.5px;background:#f0f0f0;"></div>
<div class="t" style="left:489.3px;top:51.3px;font-size:8.2px;line-height:10.2px;color:#a0a0a0;">0</div>
<svg style="left:510.5px;top:55.5px;" width="4" height="3" viewBox="0 0 4 3"><path d="M0 0.2 H4.4 L2.2 2.8 Z" fill="#8a8a8a"/></svg>
<div class="a" style="left:519.3px;top:48.5px;width:42px;height:14.5px;background:#fff;border:1px solid #e2e3ea;border-radius:1px;"></div>
<div class="a" style="left:520.3px;top:49.5px;width:30px;height:12.5px;background:#eef3fb;"></div>
<div class="a" style="left:522px;top:51.3px;width:20px;height:8.6px;background:#f4f4f4;border:1px solid #333;"></div>
<div class="t" style="left:544.8px;top:51.2px;font-size:8.2px;line-height:10.2px;color:#606878;">N</div>
<div class="a" style="left:550px;top:49.5px;width:10.5px;height:12.5px;background:#fff;"></div>
<svg style="left:554.5px;top:55.5px;" width="4" height="3" viewBox="0 0 4 3"><path d="M0 0.2 H4.4 L2.2 2.8 Z" fill="#8a8a8a"/></svg>
<div class="a" style="left:562.5px;top:48.5px;width:30.5px;height:14.5px;background:#fff;border:1px solid #d8d9de;border-radius:1px;"></div>
<div class="a" style="left:563.5px;top:49.5px;width:17px;height:12.5px;background:#f0f0f0;"></div>
<div class="t" style="left:564.5px;top:51.3px;font-size:8.2px;line-height:10.2px;color:#a0a0a0;">0</div>
<svg style="left:585.5px;top:55.5px;" width="4" height="3" viewBox="0 0 4 3"><path d="M0 0.2 H4.4 L2.2 2.8 Z" fill="#8a8a8a"/></svg>
<svg style="left:595px;top:50px;" width="10" height="10.5" viewBox="0 0 10 10.5"><defs><pattern id="hp" width="1.6" height="1.6" patternUnits="userSpaceOnUse" patternTransform="rotate(45)"><rect width="0.7" height="1.6" fill="#a8a8a8"/></pattern></defs><rect x="0" y="0" width="10" height="7.6" fill="url(#hp)"/><rect x="0" y="8" width="10" height="2.2" fill="#9a9a9a"/></svg>
<svg style="left:609px;top:55.5px;" width="4" height="3" viewBox="0 0 4 3"><path d="M0 0.2 H4.4 L2.2 2.8 Z" fill="#8a8a8a"/></svg>
<svg style="left:618.5px;top:50.2px;" width="10" height="10" viewBox="0 0 10 10"><rect x="0.6" y="0.6" width="8.6" height="8.8" fill="#f6f6f6" stroke="#c4c4c4" stroke-width="0.9"/><path d="M4.9 0.6 V9.4 M0.6 5 H9.2" stroke="#c4c4c4" stroke-width="0.9"/></svg>
<svg style="left:632px;top:55.5px;" width="4" height="3" viewBox="0 0 4 3"><path d="M0 0.2 H4.4 L2.2 2.8 Z" fill="#8a8a8a"/></svg>
<svg style="left:641.3px;top:50.2px;" width="10" height="10" viewBox="0 0 10 10"><rect x="0.6" y="0.6" width="9" height="9" fill="#f6f6f6" stroke="#b8b8b8" stroke-width="0.9"/><path d="M0.6 3.4 H9.6 M0.6 6.4 H9.6 M5 0.6 V9.6" stroke="#b8b8b8" stroke-width="0.9"/><path d="M2 5 H8" stroke="#a0a0a0" stroke-width="0.7"/></svg>
<div class="a" style="left:662.5px;top:48px;width:1px;height:15px;background:#c4c4c4;"></div>
<div class="a" style="left:665.0px;top:48px;width:1px;height:15px;background:#c4c4c4;"></div>
<div class="a" style="left:663.5px;top:48px;width:1.5px;height:15px;background:#fafafa;"></div>
<div class="a" style="left:668.2px;top:50.5px;width:1.2px;height:9.6px;background:#f06070;"></div>
<div class="a" style="left:675.5px;top:50.5px;width:1.2px;height:9.6px;background:#f06070;"></div>
<div class="t" style="left:668.9px;top:49.7px;font-size:10.5px;line-height:11px;font-weight:bold;color:#1030e0;transform:scaleX(0.86)">M</div>
<svg style="left:682.3px;top:50.2px;" width="10" height="10" viewBox="0 0 10 10"><path d="M1 1 V9.4 M8.6 1 V9.4" stroke="#a8a8a8" stroke-width="0.9"/><path d="M1.6 2.4 L8 8.4 M8 2.4 L1.6 8.4" stroke="#a8a8a8" stroke-width="1.1"/></svg>
<div class="a" style="left:696px;top:49px;width:1px;height:14px;background:#c0c0c0;"></div>
<div class="a" style="left:697px;top:49px;width:1px;height:14px;background:#fcfcfc;"></div>
<svg style="left:702.5px;top:50.2px;" width="10" height="10" viewBox="0 0 10 10"><path d="M0.6 4 H3.6 M2.1 2.6 V5.4 M0.6 7 H3.6" stroke="#a8a8a8" stroke-width="0.9"/><path d="M6.6 0.6 V9.6 M5 3.4 H8.2 M5 6.6 H8.2" stroke="#a8a8a8" stroke-width="0.9"/><path d="M5.4 2 L6.6 0.4 L7.8 2 M5.4 8 L6.6 9.8 L7.8 8" stroke="#a8a8a8" stroke-width="0.7" fill="none"/></svg>
<svg style="left:716px;top:50.2px;" width="10" height="10" viewBox="0 0 10 10"><path d="M0.6 4 H3.6 M2.1 2.6 V5.4 M0.6 7 H3.6" stroke="#a8a8a8" stroke-width="0.9"/><path d="M4.4 3.6 H10 M6 2 V5.2 M8.4 2 V5.2" stroke="#a8a8a8" stroke-width="0.9"/><path d="M6 5.2 V7.4" stroke="#a8a8a8" stroke-width="0.8"/></svg>
<div class="a" style="left:731px;top:49px;width:1px;height:14px;background:#c0c0c0;"></div>
<div class="a" style="left:732px;top:49px;width:1px;height:14px;background:#fcfcfc;"></div>
<svg style="left:735.5px;top:50.2px;" width="10" height="10" viewBox="0 0 10 10"><path d="M0.6 1 V9.6" stroke="#a8a8a8" stroke-width="0.8"/><rect x="2.6" y="4.4" width="6.4" height="4.8" fill="#a8a8a8"/><path d="M3.8 4.4 V3 Q3.8 1 5.8 1 Q7.8 1 7.8 3 V4.4" stroke="#a8a8a8" stroke-width="1" fill="none"/><path d="M10 1 V9.6" stroke="#d4d4d4" stroke-width="0.6"/></svg>
<div class="a" style="left:0px;top:64.8px;width:800px;height:1px;background:#cacaca;"></div>
<div class="a" style="left:0px;top:65.8px;width:800px;height:0.7px;background:#f8f8f8;"></div>
<div class="a" style="left:148px;top:66px;width:604px;height:517px;background:#fff;border-left:1px solid #6a6a6a;"></div>
<div class="a" style="left:148px;top:64.9px;width:604px;height:1.1px;background:#a8a8a8;"></div>
<div class="a" style="left:149px;top:66px;width:599px;height:421px;background:#fff;"></div>
<div class="a" style="left:149px;top:487px;width:599px;height:96px;background:#c0c0c0;"></div>
<div class="a" style="left:748px;top:66px;width:4px;height:517px;background:#f6f6f6;"></div>
<div class="a" style="left:751.8px;top:66px;width:1.9px;height:517px;background:linear-gradient(90deg,#c4c4c4,#a4a4a4 50%,#c8c8c8);"></div>
<div class="a" style="left:149px;top:67px;width:12px;height:11px;background:#b4b4b4;"></div>
<div class="t" style="left:153px;top:67.5px;font-size:8px;line-height:10px;color:#000;font-weight:bold;">1</div>
<svg style="left:0;top:0" width="800" height="640" viewBox="0 0 800 640"><rect x="276.0" y="277.6" width="76.5" height="139.7" fill="#ff0000" stroke="#4a4040" stroke-width="0.6"/><rect x="370.9" y="137.6" width="76.5" height="279.7" fill="#ff0000" stroke="#4a4040" stroke-width="0.6"/><rect x="465.8" y="277.6" width="76.5" height="139.7" fill="#ff0000" stroke="#4a4040" stroke-width="0.6"/><rect x="560.6" y="137.6" width="76.8" height="279.7" fill="#ff0000" stroke="#4a4040" stroke-width="0.6"/><path d="M257.3 115 V418" stroke="#2a2a2a" stroke-width="1.5" fill="none"/><path d="M256.5 417.3 H665" stroke="#2a2a2a" stroke-width="1.5" fill="none"/><path d="M251 417.3 H257 M254 382.3 H257 M251 347.3 H257 M254 312.3 H257 M251 277.3 H257 M254 242.3 H257 M251 207.3 H257 M254 172.3 H257 M251 137.3 H257 " stroke="#2a2a2a" stroke-width="1.2" fill="none"/><path d="M256.9 417.3 V421 M264.4 417.3 V421 M270.7 417.3 V421 M276.2 417.3 V421 M281.1 417.3 V421 M285.4 417.3 V424 M313.9 417.3 V421 M330.6 417.3 V421 M342.4 417.3 V421 M351.6 417.3 V421 M359.1 417.3 V421 M365.4 417.3 V421 M370.9 417.3 V421 M375.8 417.3 V421 M380.1 417.3 V424 M408.6 417.3 V421 M425.3 417.3 V421 M437.1 417.3 V421 M446.3 417.3 V421 M453.8 417.3 V421 M460.1 417.3 V421 M465.6 417.3 V421 M470.5 417.3 V421 M474.8 417.3 V424 M503.3 417.3 V421 M520.0 417.3 V421 M531.8 417.3 V421 M541.0 417.3 V421 M548.5 417.3 V421 M554.8 417.3 V421 M560.3 417.3 V421 M565.2 417.3 V421 M569.5 417.3 V424 M598.0 417.3 V421 M614.7 417.3 V421 M626.5 417.3 V421 M635.7 417.3 V421 M643.2 417.3 V421 M649.5 417.3 V421 M655.0 417.3 V421 M659.9 417.3 V421 M664.2 417.3 V424 " stroke="#2a2a2a" stroke-width="1.2" fill="none"/><text x="246" y="421.4" font-size="11.5" text-anchor="end" fill="#111" font-family="Liberation Sans, sans-serif">0.0</text><text x="246" y="351.4" font-size="11.5" text-anchor="end" fill="#111" font-family="Liberation Sans, sans-serif">0.5</text><text x="246" y="281.4" font-size="11.5" text-anchor="end" fill="#111" font-family="Liberation Sans, sans-serif">1.0</text><text x="246" y="211.4" font-size="11.5" text-anchor="end" fill="#111" font-family="Liberation Sans, sans-serif">1.5</text><text x="246" y="141.4" font-size="11.5" text-anchor="end" fill="#111" font-family="Liberation Sans, sans-serif">2.0</text><text x="285.4" y="437" font-size="11.5" text-anchor="middle" fill="#111" font-family="Liberation Sans, sans-serif">1</text><text x="380.1" y="437" font-size="11.5" text-anchor="middle" fill="#111" font-family="Liberation Sans, sans-serif">10</text><text x="474.8" y="437" font-size="11.5" text-anchor="middle" fill="#111" font-family="Liberation Sans, sans-serif">100</text><text x="569.5" y="437" font-size="11.5" text-anchor="middle" fill="#111" font-family="Liberation Sans, sans-serif">1000</text><text x="664.2" y="437" font-size="11.5" text-anchor="middle" fill="#111" font-family="Liberation Sans, sans-serif">10000</text><text x="460" y="461.3" font-size="14.8" text-anchor="middle" fill="#111" font-family="Liberation Sans, sans-serif">A</text><text transform="translate(219.3,276.2) rotate(-90)" font-size="15.5" text-anchor="middle" fill="#111" font-family="Liberation Sans, sans-serif" textLength="10.6" lengthAdjust="spacingAndGlyphs">B</text><rect x="642.5" y="86.5" width="57" height="19.5" fill="#fff" stroke="#7a7a7a" stroke-width="1"/><rect x="645.8" y="88.6" width="33.2" height="16" fill="#ff0000" stroke="#4a3030" stroke-width="0.7"/><text x="683.3" y="100.6" font-size="13.4" fill="#111" font-family="Liberation Sans, sans-serif">B</text></svg>
<div class="a" style="left:0px;top:66px;width:19px;height:226px;background:#f0f0f0;border-right:1px solid #b6b6b6;border-bottom:1px solid #c0c0c0;"></div>
<div class="a" style="left:0px;top:67.5px;width:17px;height:1px;background:#c6c6c6;"></div>
<div class="a" style="left:0px;top:70px;width:17px;height:1px;background:#c6c6c6;"></div>
<div class="a" style="left:1px;top:73px;width:16px;height:14.5px;background:#fafafa;border:1px solid #d8d8d8;border-radius:1px;"></div>
<svg style="left:3.0px;top:74.0px;" width="12" height="12" viewBox="0 0 12 12"><path d="M3.5 1 L3.5 9.5 L5.6 7.6 L7.2 11 L8.4 10.4 L6.9 7.1 L9.5 7 Z" fill="#fff" stroke="#1a1a1a" stroke-width="0.9"/></svg>
<svg style="left:3.0px;top:88.5px;" width="12" height="12" viewBox="0 0 12 12"><circle cx="5" cy="4.5" r="3.2" fill="#fff" stroke="#1a1a1a" stroke-width="1"/><path d="M3.4 4.5 H6.6 M5 2.9 V6.1" stroke="#1a1a1a" stroke-width="0.8"/><path d="M7.3 6.8 L10.8 10.3" stroke="#1a1a1a" stroke-width="1.6"/><path d="M1.5 10.5 H6" stroke="#1a1a1a" stroke-width="0.9" stroke-dasharray="1 0.6"/></svg>
<svg style="left:3.0px;top:102.7px;" width="12" height="12" viewBox="0 0 12 12"><circle cx="5" cy="4.5" r="3.2" fill="#f8f8f8" stroke="#b0b0b0" stroke-width="1"/><path d="M3.4 4.5 H6.6" stroke="#b0b0b0" stroke-width="0.8"/><path d="M7.3 6.8 L10.8 10.3" stroke="#b0b0b0" stroke-width="1.5"/><path d="M1.5 10.5 H6" stroke="#b0b0b0" stroke-width="0.9" stroke-dasharray="1 0.6"/></svg>
<svg style="left:2.5px;top:116.5px;" width="12" height="12" viewBox="0 0 12 12"><path d="M6 2 V10 M2 6 H10" stroke="#1a1a1a" stroke-width="0.8"/><path d="M6 4 L8 6 L6 8 L4 6Z" fill="#1a1a1a"/></svg>
<svg style="left:2.5px;top:131.2px;" width="12" height="12" viewBox="0 0 12 12"><rect x="2" y="2" width="6.4" height="6.6" fill="#fff" stroke="#1a1a1a" stroke-width="1"/><path d="M5.2 2 V8.6 M2 5.3 H8.4" stroke="#555" stroke-width="1.1"/><path d="M11.5 8.5 L11.5 11.5 L8.5 11.5 Z" fill="#2040d0"/></svg>
<svg style="left:2.5px;top:145.3px;" width="12" height="12" viewBox="0 0 12 12"><path d="M3.6 2.6 H8.4 M6 0.6 V3" stroke="#1a1a1a" stroke-width="0.8"/><path d="M4.4 2.8 H7.6 L6 4.8Z" fill="#1a1a1a"/><path d="M3.6 9.4 H8.4 M6 9 V11.4" stroke="#1a1a1a" stroke-width="0.8"/><path d="M4.4 9.2 H7.6 L6 7.2Z" fill="#1a1a1a"/></svg>
<svg style="left:3.0px;top:160.5px;" width="12" height="12" viewBox="0 0 12 12"><path d="M1.6 1.4 H5 M3.3 0.4 V2" stroke="#1a1a1a" stroke-width="0.8"/><path d="M1.8 2 H4.8 L3.3 3.8Z" fill="#1a1a1a"/><ellipse cx="6.4" cy="7.4" rx="4.2" ry="2" fill="#18d0e8" stroke="#1070b0" stroke-width="0.7" transform="rotate(-14 6.4 7.4)"/><path d="M1.4 9.8 L11 5.2" stroke="#2040c0" stroke-width="0.7"/><path d="M12.5 9 L12.5 12 L9.5 12 Z" fill="#2040d0"/></svg>
<svg style="left:3.0px;top:174.8px;" width="12" height="12" viewBox="0 0 12 12"><path d="M1.6 1.4 H5 M3.3 0.4 V2" stroke="#1a1a1a" stroke-width="0.8"/><path d="M1.8 2 H4.8 L3.3 3.8Z" fill="#1a1a1a"/><path d="M1.4 10.4 L11 4.6" stroke="#2040c0" stroke-width="0.8"/><path d="M4.4 6.6 H8.6 M5 6.6 V10 M8 6.6 V10" stroke="#444" stroke-width="0.8" stroke-dasharray="1 0.7" fill="none"/><path d="M12.5 9 L12.5 12 L9.5 12 Z" fill="#2040d0"/></svg>
<svg style="left:3.0px;top:189.0px;" width="12" height="12" viewBox="0 0 12 12"><circle cx="6" cy="6" r="2.6" fill="none" stroke="#1a1a1a" stroke-width="1.2" stroke-dasharray="1.2 1.5"/></svg>
<div class="t" style="left:4.5px;top:202.5px;font-family:'Liberation Serif',serif;font-weight:bold;font-size:12px;line-height:13px;color:#111">T</div>
<svg style="left:3.0px;top:217.5px;" width="12" height="12" viewBox="0 0 12 12"><path d="M2 10 L9.5 2.5" stroke="#1a1a1a" stroke-width="1.1"/><path d="M10.5 1.5 L10 5 L7 2 Z" fill="#1a1a1a"/><path d="M12.5 8 L12.5 11 L9.5 11 Z" fill="#2040d0"/></svg>
<svg style="left:3.0px;top:232.0px;" width="12" height="12" viewBox="0 0 12 12"><path d="M2 10.5 L9.5 2" stroke="#1a1a1a" stroke-width="1.1"/><path d="M12.5 8.5 L12.5 11.5 L9.5 11.5 Z" fill="#2040d0"/></svg>
<svg style="left:3.0px;top:246.5px;" width="12" height="12" viewBox="0 0 12 12"><rect x="1.5" y="2.5" width="8" height="6" fill="#9a9a9a" stroke="#1a1a1a" stroke-width="0.9"/><path d="M12.5 8.5 L12.5 11.5 L9.5 11.5 Z" fill="#2040d0"/></svg>
<svg style="left:3.0px;top:261.0px;" width="12" height="12" viewBox="0 0 12 12"><path d="M3.5 6 V3.2 a0.8 0.8 0 0 1 1.6 0 V5 V2.2 a0.8 0.8 0 0 1 1.6 0 V5 V2.8 a0.8 0.8 0 0 1 1.6 0 V5.5 V4 a0.7 0.7 0 0 1 1.4 0 V8 Q9.7 11 7 11 H5.5 Q4 11 3 9 L1.8 7 Q2.3 5.8 3.5 7 Z" fill="#fff" stroke="#1a1a1a" stroke-width="0.8"/></svg>
<svg style="left:3.0px;top:274.5px;" width="12" height="12" viewBox="0 0 12 12"><rect x="1.5" y="1.5" width="8" height="8.5" fill="#fff" stroke="#1a1a1a" stroke-width="0.9"/><path d="M3 8 V5.5 H4.5 V8 M5.5 8 V4 H7 V8" stroke="#c040c0" stroke-width="0.8" fill="none"/><path d="M12.5 9 L12.5 12 L9.5 12 Z" fill="#2040d0"/></svg>
<div class="a" style="left:19px;top:66px;width:2px;height:517px;background:#f6f6f6;"></div>
<div class="a" style="left:21px;top:66px;width:122px;height:517px;background:#f0f0f0;border-left:1px solid #fdfdfd;"></div>
<div class="a" style="left:23px;top:69.5px;width:100px;height:1px;background:#c0c0c0;"></div>
<div class="a" style="left:23px;top:72px;width:100px;height:1px;background:#c0c0c0;"></div>
<div class="a" style="left:23px;top:70.5px;width:100px;height:1.5px;background:#fafafa;"></div>
<div class="a" style="left:125px;top:67.5px;width:7px;height:7px;background:#f4f4f4;border:1px solid #fff;border-right-color:#8a8a8a;border-bottom-color:#8a8a8a;"></div>
<svg style="left:126.5px;top:69.5px;" width="4" height="3" viewBox="0 0 4 3"><path d="M0 0.3 H3.6 L1.8 2.6 Z" fill="#a0a0a0"/></svg>
<div class="a" style="left:134px;top:67.5px;width:7px;height:7px;background:#f0f0f0;border:1px solid #fff;border-right-color:#8a8a8a;border-bottom-color:#8a8a8a;"></div>
<svg style="left:135px;top:68.7px;" width="5" height="5" viewBox="0 0 5 5"><path d="M0.5 0.5 L4.3 4.3 M4.3 0.5 L0.5 4.3" stroke="#111" stroke-width="1.1"/></svg>
<div class="a" style="left:22px;top:76px;width:120.5px;height:217.5px;background:#fff;border-top:1px solid #d0d0d0;"></div>
<svg style="left:24.3px;top:77.3px;" width="9.5" height="8.5" viewBox="0 0 9.5 8.5"><path d="M0.5 1.5 Q0.5 0.6 1.3 0.6 H3.6 L4.4 1.6 H8.2 Q9 1.6 9 2.4 V7.6 Q9 8.2 8.3 8.2 H1.2 Q0.5 8.2 0.5 7.5 Z" fill="#e8e060" stroke="#6a6420" stroke-width="0.7"/><path d="M1.2 2.6 H8.3" stroke="#f8f4b0" stroke-width="0.9"/></svg>
<div class="t" id="t_unt" style="left:37px;top:78px;font-size:8.2px;line-height:10.2px;color:#2a2a2a;transform:scaleX(0.9118);">UNTITLED</div>
<div class="a" style="left:29px;top:88px;width:1px;height:7px;background:#c8c8c8;"></div>
<div class="a" style="left:29px;top:94.5px;width:6.5px;height:1px;background:#c8c8c8;"></div>
<div class="a" style="left:47px;top:88.5px;width:30.5px;height:11.5px;background:#f0f0f0;"></div>
<svg style="left:36px;top:89.7px;" width="10.5" height="8.5" viewBox="0 0 10.5 8.5"><path d="M1.5 7.6 V1.4 Q1.5 0.7 2.2 0.7 H4.2 L5 1.6 H8.6 Q9.3 1.6 9.3 2.3 V7.6 Z" fill="#c8c050" stroke="#4a4a20" stroke-width="0.7"/><path d="M0.4 3.2 H8 L9.6 8 H2 Z" fill="#eee868" stroke="#4a4a20" stroke-width="0.7"/><path d="M9.6 3 V8.3 H2.5" stroke="#222" stroke-width="0.9" fill="none"/></svg>
<div class="t" id="t_fol" style="left:49px;top:90.2px;font-size:8.2px;line-height:10.2px;color:#2a2a2a;transform:scaleX(0.9364);">Folder1</div>
<div class="a" style="left:22px;top:293.2px;width:120.5px;height:2.9px;background:linear-gradient(180deg,#f0f0f0 0%,#dcdcdc 40%,#b4b4b4 100%);"></div>
<div class="a" style="left:22px;top:296px;width:120.5px;height:277px;background:#fff;"></div>
<div class="a" style="left:22px;top:296px;width:120.5px;height:13.5px;background:linear-gradient(180deg,#ffffff,#f4f5f7);border-bottom:1px solid #dcdfe4;"></div>
<div class="a" style="left:34px;top:296.5px;width:1px;height:12.5px;background:#e4e6ea;"></div>
<div class="a" style="left:76px;top:296.5px;width:1px;height:12.5px;background:#e4e6ea;"></div>
<div class="a" style="left:89px;top:296.5px;width:1px;height:12.5px;background:#e4e6ea;"></div>
<div class="a" style="left:102px;top:296.5px;width:1px;height:12.5px;background:#e4e6ea;"></div>
<div class="a" style="left:115px;top:296.5px;width:1px;height:12.5px;background:#e4e6ea;"></div>
<div class="a" style="left:128px;top:296.5px;width:1px;height:12.5px;background:#e4e6ea;"></div>
<svg style="left:28.5px;top:302px;" width="3" height="3" viewBox="0 0 3 3"><path d="M3 0 V3 H0 Z" fill="#8a8a8a"/></svg>
<svg style="left:81px;top:302px;" width="3" height="3" viewBox="0 0 3 3"><path d="M3 0 V3 H0 Z" fill="#8a8a8a"/></svg>
<svg style="left:94px;top:302px;" width="3" height="3" viewBox="0 0 3 3"><path d="M3 0 V3 H0 Z" fill="#8a8a8a"/></svg>
<svg style="left:107px;top:302px;" width="3" height="3" viewBox="0 0 3 3"><path d="M3 0 V3 H0 Z" fill="#8a8a8a"/></svg>
<svg style="left:120px;top:302px;" width="3" height="3" viewBox="0 0 3 3"><path d="M3 0 V3 H0 Z" fill="#8a8a8a"/></svg>
<svg style="left:133px;top:302px;" width="3" height="3" viewBox="0 0 3 3"><path d="M3 0 V3 H0 Z" fill="#8a8a8a"/></svg>
<svg style="left:41.5px;top:301.3px;" width="4" height="3" viewBox="0 0 4 3"><path d="M0 3 L2 0.3 L4 3 Z" fill="#8a8a8a"/></svg>
<div class="t" id="t_ty" style="left:56.3px;top:298.4px;font-size:8.2px;line-height:10.2px;color:#333;transform:scaleX(0.922);">Ty...</div>
<svg style="left:24px;top:311.5px;" width="10.5" height="10" viewBox="0 0 10.5 10"><rect x="0.5" y="0.5" width="9.5" height="9" fill="#b8c8b8" stroke="#222" stroke-width="0.9"/><path d="M1.2 3.6 h2 v2.4 h-2z M4.2 3.6 h2 v2.4 h-2z M7.2 3.6 h2 v2.4 h-2z M1.2 6.8 h2 v2.2 h-2z M4.2 6.8 h2 v2.2 h-2z M7.2 6.8 h2 v2.2 h-2z" fill="#48d048"/><path d="M3.6 0.5 V9.5 M6.7 0.5 V9.5 M0.5 3.2 H10 M0.5 6.4 H10" stroke="#333" stroke-width="0.8"/><path d="M1.4 1.2 h1.6 v1.4 h-1.6z M4.4 1.2 h1.6 v1.4 h-1.6z M7.4 1.2 h1.6 v1.4 h-1.6z" fill="#e03030"/></svg>
<div class="t" id="t_wb" style="left:38.7px;top:312.7px;font-size:8.2px;line-height:10.2px;color:#222;transform:scaleX(1.0084);">Workb...</div>
<svg style="left:24px;top:325px;" width="10.5" height="10" viewBox="0 0 10.5 10"><rect x="0.5" y="0.5" width="9.5" height="9" fill="#e850d8" stroke="#222" stroke-width="0.8"/><rect x="2" y="2" width="6.5" height="6" fill="#30c0c0" stroke="#206060" stroke-width="0.6"/><path d="M3 6.5 L5 4.5 L6 5.5 L8 3.5" stroke="#104040" stroke-width="0.7" fill="none"/></svg>
<div class="t" id="t_gr" style="left:38.7px;top:326px;font-size:8.2px;line-height:10.2px;color:#222;transform:scaleX(0.9883);">Graph</div>
<div class="t" style="left:79.5px;top:312.7px;font-size:8.2px;line-height:10.2px;color:#222;">N</div>
<div class="t" style="left:79.5px;top:326px;font-size:8.2px;line-height:10.2px;color:#222;">M</div>
<div class="t" style="left:93px;top:312.7px;font-size:8.2px;line-height:10.2px;color:#222;">8.</div>
<div class="t" style="left:93px;top:326px;font-size:8.2px;line-height:10.2px;color:#222;">8.</div>
<div class="t" style="left:106px;top:312.7px;font-size:8.2px;line-height:10.2px;color:#222;">2.</div>
<div class="t" style="left:106px;top:326px;font-size:8.2px;line-height:10.2px;color:#222;">2.</div>
<div class="t" style="left:119px;top:312.7px;font-size:8.2px;line-height:10.2px;color:#222;">2.</div>
<div class="t" style="left:119px;top:326px;font-size:8.2px;line-height:10.2px;color:#222;">2.</div>
<div class="t" style="left:132.5px;top:312.7px;font-size:8.2px;line-height:10.2px;color:#222;">1</div>
<div class="t" style="left:132.5px;top:326px;font-size:8.2px;line-height:10.2px;color:#222;">0</div>
<div class="a" style="left:83.5px;top:325px;width:5px;height:11px;background:#fff;"></div>
<div class="a" style="left:22px;top:573px;width:120.5px;height:10px;background:#f0f0f0;border-top:1px solid #e4e4e4;"></div>
<div class="a" style="left:32.5px;top:573.5px;width:80px;height:8.5px;background:linear-gradient(180deg,#f6f6f6,#dcdcdc);border:1px solid #b0b0b0;border-radius:1.5px;"></div>
<div class="a" style="left:70.5px;top:576px;width:1px;height:4px;background:#888;"></div>
<div class="a" style="left:72.5px;top:576px;width:1px;height:4px;background:#888;"></div>
<div class="a" style="left:74.5px;top:576px;width:1px;height:4px;background:#888;"></div>
<svg style="left:25.5px;top:575.5px;" width="4" height="5" viewBox="0 0 4 5"><path d="M3.5 0 L0.5 2.5 L3.5 5 Z" fill="#555"/></svg>
<svg style="left:134.5px;top:575.5px;" width="4" height="5" viewBox="0 0 4 5"><path d="M0.5 0 L3.5 2.5 L0.5 5 Z" fill="#555"/></svg>
<div class="a" style="left:142.5px;top:66px;width:5.2px;height:517px;background:#f2f2f2;border-left:1px solid #e4e4e4;"></div>
<div class="a" style="left:147.7px;top:65px;width:1.6px;height:518px;background:#8e8e8e;"></div>
<div class="a" style="left:753px;top:66px;width:47px;height:517px;background:#f0f0f0;"></div>
<div class="a" style="left:755px;top:69.5px;width:24px;height:1px;background:#c0c0c0;"></div>
<div class="a" style="left:755px;top:72px;width:24px;height:1px;background:#c0c0c0;"></div>
<div class="a" style="left:779.5px;top:67.5px;width:7px;height:7px;background:#f4f4f4;border:1px solid #fff;border-right-color:#8a8a8a;border-bottom-color:#8a8a8a;"></div>
<svg style="left:781px;top:69.5px;" width="4" height="3" viewBox="0 0 4 3"><path d="M0 0.3 H3.6 L1.8 2.6 Z" fill="#a0a0a0"/></svg>
<svg style="left:789.5px;top:68.7px;" width="5" height="5" viewBox="0 0 5 5"><path d="M0.5 0.5 L4.3 4.3 M4.3 0.5 L0.5 4.3" stroke="#111" stroke-width="1.1"/></svg>
<div class="a" style="left:754.5px;top:75.5px;width:32px;height:497px;background:#fff;border-top:1px solid #d0d0d0;border-left:1px solid #e0e0e0;"></div>
<div class="a" style="left:786.5px;top:76px;width:11.5px;height:497px;background:#ededed;"></div>
<div class="a" style="left:798px;top:66px;width:2px;height:517px;background:#e2e2e2;"></div>
<div class="a" style="left:754.5px;top:572.5px;width:32px;height:10px;background:#f0f0f0;"></div>
<svg style="left:757.5px;top:575px;" width="4" height="5" viewBox="0 0 4 5"><path d="M3.5 0 L0.5 2.5 L3.5 5 Z" fill="#888"/></svg>
<svg style="left:778px;top:575px;" width="4" height="5" viewBox="0 0 4 5"><path d="M0.5 0 L3.5 2.5 L0.5 5 Z" fill="#888"/></svg>
<svg style="left:789px;top:565px;" width="5" height="4" viewBox="0 0 5 4"><path d="M0 0.5 H5 L2.5 3.5 Z" fill="#888"/></svg>
<div class="a" style="left:787.6px;top:70.6px;width:28.6px;height:28.6px;background:radial-gradient(circle at 50% 40%,#f8922e,#f08020);border-radius:14.3px;border:1px solid #e0d8d0;box-shadow:0 0.5px 2px #777;"></div>
<div class="t" style="left:791.8px;top:79.2px;font-size:8.6px;line-height:10.6px;color:#fff;font-weight:bold;">68</div>
<div class="a" style="left:789.5px;top:135.5px;width:14px;height:41.5px;background:#f4f4f4;border:1px solid #c4c8cc;border-radius:5px;"></div>
<div class="a" style="left:791.3px;top:139.3px;width:6.6px;height:34.6px;background:#2878c0;border-radius:1.5px;"></div>
<div class="a" style="left:792.2px;top:151.0px;width:4.8px;height:1.6px;background:#50f020;"></div>
<div class="a" style="left:792.2px;top:153.8px;width:4.8px;height:1.6px;background:#50f020;"></div>
<div class="a" style="left:792.2px;top:156.6px;width:4.8px;height:1.6px;background:#50f020;"></div>
<div class="a" style="left:792.2px;top:159.4px;width:4.8px;height:1.6px;background:#50f020;"></div>
<div class="a" style="left:792.2px;top:162.2px;width:4.8px;height:1.6px;background:#50f020;"></div>
<div class="a" style="left:792.2px;top:165.0px;width:4.8px;height:1.6px;background:#50f020;"></div>
<div class="a" style="left:792.2px;top:167.8px;width:4.8px;height:1.6px;background:#50f020;"></div>
<div class="a" style="left:792.2px;top:170.6px;width:4.8px;height:1.6px;background:#50f020;"></div>
<div class="a" style="left:792.2px;top:141.0px;width:4.8px;height:1.2px;background:#58a0e0;"></div>
<div class="a" style="left:792.2px;top:143.5px;width:4.8px;height:1.2px;background:#58a0e0;"></div>
<div class="a" style="left:792.2px;top:146.0px;width:4.8px;height:1.2px;background:#58a0e0;"></div>
<div class="a" style="left:792.2px;top:148.5px;width:4.8px;height:1.2px;background:#58a0e0;"></div>
<div class="a" style="left:0px;top:583px;width:800px;height:21px;background:#f0f0f0;"></div>
<div class="a" style="left:0px;top:583.5px;width:234.5px;height:19.5px;background:#f0f0f0;border-right:1px solid #d0d0d0;border-bottom:1px solid #d4d4d4;border-top:1px solid #fafafa;"></div>
<div class="a" style="left:236.5px;top:583.5px;width:159.5px;height:19.5px;background:#f0f0f0;border-right:1px solid #d0d0d0;border-bottom:1px solid #d4d4d4;"></div>
<div class="a" style="left:398px;top:583.5px;width:240px;height:19.5px;background:#f0f0f0;border-right:1px solid #d0d0d0;border-bottom:1px solid #d4d4d4;"></div>
<div class="a" style="left:3.5px;top:585.5px;width:1px;height:15px;background:#c4c4c4;"></div>
<div class="a" style="left:6.0px;top:585.5px;width:1px;height:15px;background:#c4c4c4;"></div>
<div class="a" style="left:4.5px;top:585.5px;width:1.5px;height:15px;background:#fafafa;"></div>
<svg style="left:9px;top:587.3px;" width="10" height="10" viewBox="0 0 10 10"><path d="M0.6 9.6 L9.6 0.6" stroke="#333" stroke-width="0.9"/></svg>
<svg style="left:22.5px;top:591.8px;" width="4" height="3" viewBox="0 0 4 3"><path d="M0 0.2 H4.4 L2.2 2.8 Z" fill="#111"/></svg>
<svg style="left:32px;top:587.3px;" width="10" height="10" viewBox="0 0 10 10"><rect x="0.4" y="7.6" width="1.8" height="1.8" fill="#111"/><rect x="3.2" y="4.6" width="1.8" height="1.8" fill="#111"/><rect x="5.6" y="2.6" width="1.8" height="1.8" fill="#111"/><rect x="7.8" y="0.6" width="1.8" height="1.8" fill="#111"/></svg>
<svg style="left:45.5px;top:591.8px;" width="4" height="3" viewBox="0 0 4 3"><path d="M0 0.2 H4.4 L2.2 2.8 Z" fill="#111"/></svg>
<svg style="left:55px;top:587.3px;" width="10" height="10" viewBox="0 0 10 10"><path d="M1.4 8.6 L8.6 1.4" stroke="#111" stroke-width="0.9"/><rect x="0.4" y="7.6" width="2" height="2" fill="#111"/><rect x="4" y="4" width="2" height="2" fill="#111"/><rect x="7.6" y="0.4" width="2" height="2" fill="#111"/></svg>
<svg style="left:69px;top:591.8px;" width="4" height="3" viewBox="0 0 4 3"><path d="M0 0.2 H4.4 L2.2 2.8 Z" fill="#111"/></svg>
<svg style="left:77.3px;top:587.3px;" width="10" height="10" viewBox="0 0 10 10"><rect x="0.6" y="4.4" width="2.6" height="5.2" fill="#f00000" stroke="#400" stroke-width="0.6"/><rect x="3.6" y="0.8" width="2.6" height="8.8" fill="#f00000" stroke="#400" stroke-width="0.6"/><rect x="6.6" y="3" width="2.6" height="6.6" fill="#f00000" stroke="#400" stroke-width="0.6"/></svg>
<svg style="left:92px;top:591.8px;" width="4" height="3" viewBox="0 0 4 3"><path d="M0 0.2 H4.4 L2.2 2.8 Z" fill="#111"/></svg>
<svg style="left:100.5px;top:587.3px;" width="10" height="10" viewBox="0 0 10 10"><path d="M0.6 9.6 V7 L4.4 0.8 L6.4 4 L8 3 L9.8 6.4 V9.6Z" fill="#f0f4f8" stroke="#444" stroke-width="0.7"/><path d="M1 8.4 L3.4 3.6 L5 6 L6.6 5.4 L9 7.6" stroke="#30c040" stroke-width="0.8" fill="none"/><path d="M1 9 L4.6 5.6 L6.4 7.4 L9 6" stroke="#e040c0" stroke-width="0.8" fill="none"/></svg>
<svg style="left:115px;top:591.8px;" width="4" height="3" viewBox="0 0 4 3"><path d="M0 0.2 H4.4 L2.2 2.8 Z" fill="#111"/></svg>
<svg style="left:124px;top:587.3px;" width="10" height="10" viewBox="0 0 10 10"><rect x="2.8" y="3" width="4.4" height="4" fill="#fff" stroke="#e01010" stroke-width="1"/><path d="M5 0.8 V3 M5 7 V9.4 M3.2 0.8 H6.8 M3.2 9.4 H6.8 M2.8 5 H7.2" stroke="#e01010" stroke-width="0.9"/></svg>
<svg style="left:138.5px;top:591.8px;" width="4" height="3" viewBox="0 0 4 3"><path d="M0 0.2 H4.4 L2.2 2.8 Z" fill="#111"/></svg>
<svg style="left:146.3px;top:588.6999999999999px;" width="11" height="8" viewBox="0 0 11 8"><path d="M0.3 7.6 Q0.8 2.6 5.2 0.5 Q9.8 2.2 10.8 6.2 L8 5.6 Q6.8 3.8 5.2 3.5 Q3.2 4.4 2.7 7.4Z" fill="#0a30e8" stroke="#0a2080" stroke-width="0.4"/></svg>
<svg style="left:162px;top:591.8px;" width="4" height="3" viewBox="0 0 4 3"><path d="M0 0.2 H4.4 L2.2 2.8 Z" fill="#111"/></svg>
<svg style="left:170px;top:587.3px;" width="10" height="10" viewBox="0 0 10 10"><path d="M5 0.6 L9.6 9.4 H0.4Z" fill="#d8e0f8" stroke="#222" stroke-width="0.8"/><path d="M2 6.4 H8 M3.2 4 H6.8 M5 0.6 V9.4 M1 8 H9" stroke="#2040c0" stroke-width="0.5"/></svg>
<svg style="left:185px;top:591.8px;" width="4" height="3" viewBox="0 0 4 3"><path d="M0 0.2 H4.4 L2.2 2.8 Z" fill="#111"/></svg>
<svg style="left:192.5px;top:587.3px;" width="10" height="10" viewBox="0 0 10 10"><path d="M3 1.4 V9 M7.4 0.4 V9.8" stroke="#222" stroke-width="0.7"/><rect x="1.8" y="3" width="2.4" height="4" fill="#fff" stroke="#222" stroke-width="0.6"/><rect x="6" y="2.2" width="2.8" height="5.8" fill="#f00000" stroke="#a00" stroke-width="0.5"/></svg>
<svg style="left:208px;top:591.8px;" width="4" height="3" viewBox="0 0 4 3"><path d="M0 0.2 H4.4 L2.2 2.8 Z" fill="#111"/></svg>
<svg style="left:217px;top:587.3px;" width="10" height="10" viewBox="0 0 10 10"><path d="M0.8 2.6 L3 0.8 H9.4 V7.4 L7.2 9.4 H0.8Z" fill="#e8d820" stroke="#111" stroke-width="0.9"/><path d="M0.8 2.6 H7.2 V9.4 M7.2 2.6 L9.4 0.8" stroke="#111" stroke-width="0.7" fill="none"/><rect x="2.2" y="4" width="3.4" height="3.6" fill="#111"/><rect x="3" y="4.8" width="1.6" height="1.6" fill="#e04040"/></svg>
<div class="a" style="left:237.5px;top:585.5px;width:1px;height:15px;background:#c4c4c4;"></div>
<div class="a" style="left:240.0px;top:585.5px;width:1px;height:15px;background:#c4c4c4;"></div>
<div class="a" style="left:238.5px;top:585.5px;width:1.5px;height:15px;background:#fafafa;"></div>
<svg style="left:242.5px;top:587.3px;" width="10" height="10" viewBox="0 0 10 10"><path d="M0.8 3.6 L3.6 0.8 H9.4 V6.4 L6.6 9.4 H0.8Z" fill="#ececec" stroke="#b0b0b0" stroke-width="0.9"/><path d="M0.8 3.6 H6.6 V9.4 M6.6 3.6 L9.4 0.8" stroke="#b0b0b0" stroke-width="0.7" fill="none"/><circle cx="3.4" cy="6.4" r="0.8" fill="#b0b0b0"/><circle cx="5" cy="5" r="0.8" fill="#b0b0b0"/></svg>
<svg style="left:257.5px;top:591.8px;" width="4" height="3" viewBox="0 0 4 3"><path d="M0 0.2 H4.4 L2.2 2.8 Z" fill="#a0a0a0"/></svg>
<div class="a" style="left:266.5px;top:586px;width:1px;height:14px;background:#c0c0c0;"></div>
<div class="a" style="left:267.5px;top:586px;width:1px;height:14px;background:#fcfcfc;"></div>
<svg style="left:270.5px;top:587.3px;" width="10" height="10" viewBox="0 0 10 10"><path d="M0.8 3.6 L3.6 0.8 H9.4 V6.4 L6.6 9.4 H0.8Z" fill="#ececec" stroke="#b0b0b0" stroke-width="0.9"/><path d="M0.8 3.6 H6.6 V9.4 M6.6 3.6 L9.4 0.8" stroke="#b0b0b0" stroke-width="0.7" fill="none"/><rect x="2" y="4.4" width="1.6" height="4.8" fill="#b0b0b0"/><rect x="4.4" y="5.4" width="1.6" height="3.8" fill="#b0b0b0"/></svg>
<svg style="left:285.5px;top:591.8px;" width="4" height="3" viewBox="0 0 4 3"><path d="M0 0.2 H4.4 L2.2 2.8 Z" fill="#a0a0a0"/></svg>
<div class="a" style="left:294.5px;top:586px;width:1px;height:14px;background:#c0c0c0;"></div>
<div class="a" style="left:295.5px;top:586px;width:1px;height:14px;background:#fcfcfc;"></div>
<svg style="left:299.5px;top:587.3px;" width="10" height="10" viewBox="0 0 10 10"><path d="M0.6 8.6 L4 2.6 H10 L6.6 8.6Z" fill="#c4c4c4" stroke="#b0b0b0" stroke-width="0.8"/><path d="M0.6 6.6 L4 0.8 H10 L6.6 6.6Z" fill="#9a9a9a" stroke="#8a8a8a" stroke-width="0.8"/></svg>
<svg style="left:313.5px;top:591.8px;" width="4" height="3" viewBox="0 0 4 3"><path d="M0 0.2 H4.4 L2.2 2.8 Z" fill="#a0a0a0"/></svg>
<svg style="left:321.5px;top:587.3px;" width="10" height="10" viewBox="0 0 10 10"><path d="M0.6 8.6 L4 2.8 H10 L6.6 8.6Z M0.6 6.6 L4 0.8 H10 L6.6 6.6Z M2.4 5.6 H8.2 M3 4.6 H9" fill="#ececec" stroke="#b0b0b0" stroke-width="0.8"/></svg>
<svg style="left:336.5px;top:591.8px;" width="4" height="3" viewBox="0 0 4 3"><path d="M0 0.2 H4.4 L2.2 2.8 Z" fill="#a0a0a0"/></svg>
<svg style="left:345.5px;top:587.3px;" width="10" height="10" viewBox="0 0 10 10"><path d="M0.4 0.8 h4 v2.4 h-4z M5.6 0.8 h4 v2.4 h-4z M0.4 4 h4 v2.4 h-4z M5.6 4 h4 v2.4 h-4z M0.4 7.2 h4 v2.4 h-4z M5.6 7.2 h4 v2.4 h-4z" fill="#9a9a9a"/></svg>
<svg style="left:359.5px;top:591.8px;" width="4" height="3" viewBox="0 0 4 3"><path d="M0 0.2 H4.4 L2.2 2.8 Z" fill="#a0a0a0"/></svg>
<svg style="left:368px;top:587.3px;" width="10" height="10" viewBox="0 0 10 10"><rect x="0.6" y="0.8" width="8.8" height="8.6" fill="#ececec" stroke="#b0b0b0" stroke-width="0.9"/><path d="M1.6 1.8 H6 L1.6 6Z" fill="#8a8a8a"/><rect x="4.6" y="4.6" width="3.8" height="3.8" fill="#9a9a9a"/></svg>
<svg style="left:383px;top:591.8px;" width="4" height="3" viewBox="0 0 4 3"><path d="M0 0.2 H4.4 L2.2 2.8 Z" fill="#a0a0a0"/></svg>
<div class="a" style="left:399px;top:585.5px;width:1px;height:15px;background:#c4c4c4;"></div>
<div class="a" style="left:401.5px;top:585.5px;width:1px;height:15px;background:#c4c4c4;"></div>
<div class="a" style="left:400px;top:585.5px;width:1.5px;height:15px;background:#fafafa;"></div>
<svg style="left:404.5px;top:587.3px;" width="10" height="10" viewBox="0 0 10 10"><rect x="1" y="0.8" width="4" height="3" fill="#f4f4f4" stroke="#b8b8b8" stroke-width="0.8"/><rect x="1" y="5.8" width="8" height="3" fill="#f4f4f4" stroke="#b8b8b8" stroke-width="0.8"/><path d="M0.6 0 V10" stroke="#b8b8b8" stroke-width="0.7"/></svg>
<svg style="left:418.5px;top:587.3px;" width="10" height="10" viewBox="0 0 10 10"><rect x="5" y="0.8" width="4" height="3" fill="#f4f4f4" stroke="#b8b8b8" stroke-width="0.8"/><rect x="1" y="5.8" width="8" height="3" fill="#f4f4f4" stroke="#b8b8b8" stroke-width="0.8"/><path d="M9.4 0 V10" stroke="#b8b8b8" stroke-width="0.7"/></svg>
<div class="a" style="left:433.3px;top:586px;width:1px;height:14px;background:#c0c0c0;"></div>
<div class="a" style="left:434.3px;top:586px;width:1px;height:14px;background:#fcfcfc;"></div>
<svg style="left:437.5px;top:587.3px;" width="10" height="10" viewBox="0 0 10 10"><rect x="1" y="1.4" width="3" height="7.6" fill="#f4f4f4" stroke="#b8b8b8" stroke-width="0.8"/><rect x="5.8" y="1.4" width="3" height="4" fill="#f4f4f4" stroke="#b8b8b8" stroke-width="0.8"/><path d="M0 0.8 H10" stroke="#b8b8b8" stroke-width="0.7"/></svg>
<svg style="left:452px;top:587.3px;" width="10" height="10" viewBox="0 0 10 10"><rect x="1" y="1.4" width="3" height="7.6" fill="#f4f4f4" stroke="#b8b8b8" stroke-width="0.8"/><rect x="5.8" y="4.8" width="3" height="4" fill="#f4f4f4" stroke="#b8b8b8" stroke-width="0.8"/><path d="M0 9.4 H10" stroke="#b8b8b8" stroke-width="0.7"/></svg>
<div class="a" style="left:467.3px;top:586px;width:1px;height:14px;background:#c0c0c0;"></div>
<div class="a" style="left:468.3px;top:586px;width:1px;height:14px;background:#fcfcfc;"></div>
<svg style="left:471.5px;top:587.3px;" width="10" height="10" viewBox="0 0 10 10"><rect x="3" y="0.8" width="3.6" height="3" fill="#f4f4f4" stroke="#b8b8b8" stroke-width="0.8"/><rect x="1" y="5.6" width="7.6" height="3.4" fill="#f4f4f4" stroke="#b8b8b8" stroke-width="0.8"/><path d="M4.8 0 V10" stroke="#b8b8b8" stroke-width="0.6"/></svg>
<svg style="left:486px;top:587.3px;" width="10" height="10" viewBox="0 0 10 10"><rect x="0.6" y="3.4" width="3" height="3.6" fill="#f4f4f4" stroke="#b8b8b8" stroke-width="0.8"/><rect x="5" y="2" width="4.4" height="6.2" fill="#f4f4f4" stroke="#b8b8b8" stroke-width="0.8"/><path d="M0 5.2 H10" stroke="#b8b8b8" stroke-width="0.6"/></svg>
<div class="a" style="left:500.5px;top:586px;width:1px;height:14px;background:#c0c0c0;"></div>
<div class="a" style="left:501.5px;top:586px;width:1px;height:14px;background:#fcfcfc;"></div>
<svg style="left:505px;top:587.3px;" width="10" height="10" viewBox="0 0 10 10"><rect x="1.4" y="0.6" width="5" height="2.8" fill="#f4f4f4" stroke="#b8b8b8" stroke-width="0.8"/><rect x="1.4" y="6.4" width="8" height="2.8" fill="#f4f4f4" stroke="#b8b8b8" stroke-width="0.8"/><path d="M0.6 0 V10 M2 4.8 H8" stroke="#b8b8b8" stroke-width="0.7"/></svg>
<svg style="left:519.5px;top:587.3px;" width="10" height="10" viewBox="0 0 10 10"><rect x="0.8" y="1.4" width="2.8" height="7.6" fill="#f4f4f4" stroke="#b8b8b8" stroke-width="0.8"/><rect x="6.4" y="1.4" width="2.8" height="7.6" fill="#f4f4f4" stroke="#b8b8b8" stroke-width="0.8"/><path d="M0 0.8 H10 M4.8 2 V8" stroke="#b8b8b8" stroke-width="0.7"/></svg>
<div class="a" style="left:534.3px;top:586px;width:1px;height:14px;background:#c0c0c0;"></div>
<div class="a" style="left:535.3px;top:586px;width:1px;height:14px;background:#fcfcfc;"></div>
<svg style="left:538.8px;top:587.3px;" width="10" height="10" viewBox="0 0 10 10"><rect x="0.8" y="0.8" width="5.6" height="5.2" fill="#f4f4f4" stroke="#7a7a7a" stroke-width="0.8"/><rect x="3.8" y="3.8" width="5.6" height="5.4" fill="#8a8a8a" stroke="#7a7a7a" stroke-width="0.8"/></svg>
<svg style="left:553px;top:587.3px;" width="10" height="10" viewBox="0 0 10 10"><rect x="0.8" y="0.8" width="5.6" height="5.2" fill="#8a8a8a" stroke="#7a7a7a" stroke-width="0.8"/><rect x="3.8" y="3.8" width="5.6" height="5.4" fill="#8a8a8a" stroke="#7a7a7a" stroke-width="0.8"/></svg>
<div class="a" style="left:568px;top:586px;width:1px;height:14px;background:#c0c0c0;"></div>
<div class="a" style="left:569px;top:586px;width:1px;height:14px;background:#fcfcfc;"></div>
<svg style="left:572px;top:587.3px;" width="10" height="10" viewBox="0 0 10 10"><rect x="2" y="2.6" width="6" height="5" fill="#fafafa" stroke="#b8b8b8" stroke-width="0.8"/><path d="M0.6 1 h1 M0.6 9 h1 M8.6 1 h1 M8.6 9 h1" stroke="#b8b8b8" stroke-width="0.8"/></svg>
<svg style="left:586px;top:587.3px;" width="10" height="10" viewBox="0 0 10 10"><rect x="2" y="2.6" width="6" height="5" fill="#fafafa" stroke="#b8b8b8" stroke-width="0.8"/><rect x="3.6" y="4" width="2.8" height="2.2" fill="none" stroke="#b8b8b8" stroke-width="0.6"/></svg>
<div class="a" style="left:601.3px;top:586px;width:1px;height:14px;background:#c0c0c0;"></div>
<div class="a" style="left:602.3px;top:586px;width:1px;height:14px;background:#fcfcfc;"></div>
<svg style="left:606px;top:587.3px;" width="10" height="10" viewBox="0 0 10 10"><rect x="1.4" y="1.4" width="7.4" height="7.4" fill="none" stroke="#a0a0a0" stroke-width="0.8" stroke-dasharray="1.4 0.8"/><path d="M0.4 0.4 h2 v2 h-2z M7.8 0.4 h2 v2 h-2z M0.4 7.8 h2 v2 h-2z M7.8 7.8 h2 v2 h-2z" fill="#f4f4f4" stroke="#a0a0a0" stroke-width="0.6"/></svg>
<svg style="left:621px;top:587.3px;" width="10" height="10" viewBox="0 0 10 10"><rect x="0.8" y="0.8" width="5.4" height="5" fill="none" stroke="#a0a0a0" stroke-width="0.8" stroke-dasharray="1.4 0.8"/><rect x="4" y="4" width="5.4" height="5.4" fill="none" stroke="#a0a0a0" stroke-width="0.8" stroke-dasharray="1.4 0.8"/><path d="M3 3 h2 v2 h-2z" fill="#f4f4f4" stroke="#a0a0a0" stroke-width="0.6"/></svg>
<div class="a" style="left:0px;top:603.5px;width:800px;height:11.5px;background:#f5f5f5;border-top:1px solid #c4c4c4;"></div>
<div class="a" style="left:0px;top:604.5px;width:800px;height:1px;background:#fcfcfc;"></div>
<div class="t" id="s1" style="left:2px;top:605.6px;font-size:8.1px;line-height:10.1px;color:#1e1e1e;transform:scaleX(0.9813);">Text: size(actual) = 22(22)</div>
<div class="t" id="s2" style="left:450px;top:605.6px;font-size:8.1px;line-height:10.1px;color:#1e1e1e;transform:scaleX(0.9787);">AU : ON</div>
<div class="t" id="s3" style="left:486px;top:605.6px;font-size:8.1px;line-height:10.1px;color:#1e1e1e;transform:scaleX(1.0243);">Dark Colors &amp; Light Grids</div>
<div class="t" id="s4" style="left:594px;top:605.6px;font-size:8.1px;line-height:10.1px;color:#1e1e1e;transform:scaleX(0.9823);">1:[Book1]Sheet1!Col(B)[1:4]</div>
<div class="t" id="s5" style="left:709px;top:605.6px;font-size:8.1px;line-height:10.1px;color:#1e1e1e;transform:scaleX(0.9899);">1:[Graph1]1!1</div>
<div class="t" id="s6" style="left:769px;top:605.6px;font-size:8.1px;line-height:10.1px;color:#1e1e1e;transform:scaleX(0.9744);">Radian</div>
<div class="a" style="left:482.5px;top:605.5px;width:1px;height:9px;background:#d4d4d4;"></div>
<div class="a" style="left:591px;top:605.5px;width:1px;height:9px;background:#d4d4d4;"></div>
<div class="a" style="left:706px;top:605.5px;width:1px;height:9px;background:#d4d4d4;"></div>
<div class="a" style="left:766px;top:605.5px;width:1px;height:9px;background:#d4d4d4;"></div>
<div class="a" style="left:0px;top:615px;width:800px;height:25px;background:linear-gradient(180deg,#2a4678 0%,#19335f 6%,#1a3664 50%,#1c396a 100%);"></div>
<div class="a" style="left:5.2px;top:616.3px;width:23px;height:23px;background:radial-gradient(circle at 50% 105%,#60e0ff 0%,#2a9ae0 28%,#1a5aa8 55%,#143c80 80%,#1a4488 100%);border-radius:12px;border:1px solid #86a8cc;box-shadow:0 0 2px #0a1830;"></div>
<div class="a" style="left:7.5px;top:617.5px;width:18.5px;height:10px;background:linear-gradient(180deg,rgba(255,255,255,0.45),rgba(255,255,255,0.05));border-radius:9px 9px 12px 12px / 8px 8px 4px 4px;"></div>
<svg style="left:9.8px;top:620.6px;" width="13" height="13" viewBox="0 0 13 13"><g transform="scale(1.12)"><path d="M1.2 2.6 Q3.8 0.8 6.2 2.6 L5.4 6 Q3 4.4 0.4 6Z" fill="#f06a28"/><path d="M7 3 Q9.6 4.8 12.2 3 L11.4 6.4 Q8.8 8 6.2 6.4Z" fill="#8cd030"/><path d="M0.2 6.8 Q2.8 5.2 5.2 6.8 L4.4 10.2 Q2 8.6 -0.6 10.2Z" fill="#38a8f8"/><path d="M6 7.2 Q8.6 8.8 11.2 7.2 L10.4 10.6 Q7.8 12.2 5.2 10.6Z" fill="#f8c818"/></g></svg>
<div class="a" style="left:36px;top:618.5px;width:1px;height:1px;background:#14284c;"></div>
<div class="a" style="left:38px;top:618.5px;width:1px;height:1px;background:#14284c;"></div>
<div class="a" style="left:40px;top:618.5px;width:1px;height:1px;background:#14284c;"></div>
<div class="a" style="left:36px;top:620.5px;width:1px;height:1px;background:#14284c;"></div>
<div class="a" style="left:38px;top:620.5px;width:1px;height:1px;background:#14284c;"></div>
<div class="a" style="left:40px;top:620.5px;width:1px;height:1px;background:#14284c;"></div>
<div class="a" style="left:36px;top:622.5px;width:1px;height:1px;background:#14284c;"></div>
<div class="a" style="left:38px;top:622.5px;width:1px;height:1px;background:#14284c;"></div>
<div class="a" style="left:40px;top:622.5px;width:1px;height:1px;background:#14284c;"></div>
<div class="a" style="left:36px;top:624.5px;width:1px;height:1px;background:#14284c;"></div>
<div class="a" style="left:38px;top:624.5px;width:1px;height:1px;background:#14284c;"></div>
<div class="a" style="left:40px;top:624.5px;width:1px;height:1px;background:#14284c;"></div>
<div class="a" style="left:36px;top:626.5px;width:1px;height:1px;background:#14284c;"></div>
<div class="a" style="left:38px;top:626.5px;width:1px;height:1px;background:#14284c;"></div>
<div class="a" style="left:40px;top:626.5px;width:1px;height:1px;background:#14284c;"></div>
<div class="a" style="left:36px;top:628.5px;width:1px;height:1px;background:#14284c;"></div>
<div class="a" style="left:38px;top:628.5px;width:1px;height:1px;background:#14284c;"></div>
<div class="a" style="left:40px;top:628.5px;width:1px;height:1px;background:#14284c;"></div>
<div class="a" style="left:36px;top:630.5px;width:1px;height:1px;background:#14284c;"></div>
<div class="a" style="left:38px;top:630.5px;width:1px;height:1px;background:#14284c;"></div>
<div class="a" style="left:40px;top:630.5px;width:1px;height:1px;background:#14284c;"></div>
<div class="a" style="left:36px;top:632.5px;width:1px;height:1px;background:#14284c;"></div>
<div class="a" style="left:38px;top:632.5px;width:1px;height:1px;background:#14284c;"></div>
<div class="a" style="left:40px;top:632.5px;width:1px;height:1px;background:#14284c;"></div>
<div class="a" style="left:36px;top:634.5px;width:1px;height:1px;background:#14284c;"></div>
<div class="a" style="left:38px;top:634.5px;width:1px;height:1px;background:#14284c;"></div>
<div class="a" style="left:40px;top:634.5px;width:1px;height:1px;background:#14284c;"></div>
<div class="a" style="left:54px;top:617.5px;width:18px;height:18px;background:#151a58;border:1px solid #8ab4ec;"></div>
<div class="t" style="left:56.8px;top:620.5px;font-size:10.5px;line-height:12.5px;color:#a8ccff;font-weight:bold;letter-spacing:-0.3px;">Ps</div>
<div class="a" style="left:87px;top:617.5px;width:20px;height:19.5px;background:#5848a4;border:1px solid #6c5cb4;"></div>
<svg style="left:89px;top:619px;" width="16" height="17" viewBox="0 0 16 17"><path d="M1.6 11.4 H14.4 L12.6 15.4 H3.6Z" fill="#f0ecff"/><path d="M3 2.6 h2.6 v2 h-2.6z M2.6 5.2 h3.4 v2.4 h-3.4z M2.4 8.2 h3.8 v2.4 h-3.8z M7 1.2 h2.8 v2.2 h-2.8z M6.8 4 h3.4 v2.8 h-3.4z M6.6 7.4 h3.8 v3.2 h-3.8z M11.2 3.4 h2.2 v2 h-2.2z M11 6 h2.8 v2.2 h-2.8z M10.9 8.8 h3.1 v1.9 h-3.1z" fill="#f4f0ff"/><path d="M4.3 1.6 V11 M8.4 0.2 V11 M12.3 2.4 V11" stroke="#e0d8f8" stroke-width="0.5"/><path d="M0.6 9.4 L2.2 11" stroke="#e0d8f8" stroke-width="0.6"/></svg>
<div class="a" style="left:120.5px;top:617.5px;width:19.5px;height:19.5px;background:#fff;"></div>
<div class="t" style="left:122.3px;top:617.3px;font-size:6.6px;line-height:8.6px;color:#c01010;font-weight:bold;letter-spacing:1.4px;">XPS</div>
<svg style="left:120.5px;top:623px;" width="19.5" height="14" viewBox="0 0 19.5 14"><path d="M1 13.5 Q5 12 8 2 Q10 -1 12 5 Q14 11 18.5 13.5" stroke="#1030e0" stroke-width="1.3" fill="none"/><path d="M1 13.5 Q4 13 6.5 6 Q8 3 9.4 7 L11 12 L12.6 7 Q14 4 15.6 8 Q17 12.6 18.5 13.5" stroke="#e01010" stroke-width="1.1" fill="none"/></svg>
<div class="a" style="left:149px;top:616px;width:50.5px;height:23px;background:linear-gradient(180deg,#4c6690 0%,#3a5480 45%,#2b436e 55%,#304a78 100%);border:1px solid #6c88b2;border-radius:2px;box-shadow:inset 0 0 0 1px #425c88;"></div>
<svg style="left:157px;top:617px;" width="14" height="12" viewBox="0 0 14 12"><rect x="0.5" y="0.5" width="13" height="11" fill="#e8eef8" stroke="#8aa0c8" stroke-width="0.7"/><path d="M0.5 3 H13.5 M0.5 6 H13.5 M0.5 9 H13.5 M4.5 0.5 V11.5 M9 0.5 V11.5" stroke="#9ab0d8" stroke-width="0.7"/><rect x="0.5" y="0.5" width="13" height="2.5" fill="#b8c8e8"/></svg>
<div class="a" style="left:151px;top:619px;width:18.5px;height:18.5px;background:radial-gradient(circle at 40% 35%,#f8b0a0 0%,#e85848 45%,#c83028 100%);border-radius:9.5px;border:1px solid #e8a090;opacity:0.93;"></div>
<svg style="left:154px;top:622px;" width="13" height="12" viewBox="0 0 13 12"><path d="M1.6 10 L4.6 5.4 L7 7 L10.6 1.6" stroke="#fde0d8" stroke-width="1.1" fill="none"/><path d="M3.4 1.4 V10.8 M7.6 1.4 V10.8" stroke="#f8c0b0" stroke-width="0.6"/></svg>
<div class="t" id="k1" style="left:174.4px;top:622px;font-size:8.6px;line-height:10.6px;color:#fff;transform:scaleX(0.9399);">Orig...</div>
<div class="a" style="left:208px;top:617.5px;width:19.5px;height:19.5px;background:radial-gradient(circle at 45% 35%,#7ad8d8 0%,#38a8b0 55%,#207880 100%);border-radius:10px;border:1px solid #78c0c8;"></div>
<svg style="left:210px;top:621px;" width="16" height="12" viewBox="0 0 16 12"><path d="M1 9 L2.4 4 L3.6 8 L5 2 L6.4 8 L7.6 3.4 L9 8.6 L10.4 4.6 L11.6 8 L13 5 L14 9" stroke="#b89860" stroke-width="0.8" fill="none"/></svg>
<div class="a" style="left:240.5px;top:617.5px;width:20px;height:19.5px;background:linear-gradient(135deg,#78a838,#5a8c28);border:1px solid #88b848;"></div>
<svg style="left:242px;top:619.5px;" width="17" height="15" viewBox="0 0 17 15"><path d="M8.4 7.4 Q4 1 2.4 5 Q1.4 9 5 8.6 Q8 8 9.4 4.4 Q11 1.4 13.6 2.6 Q15.6 4.4 12.4 6.4 Q8.4 8 8.4 10.4 Q9 13 14.6 11.6 M8.4 7.4 Q6 12 3.6 12.4 Q1.4 12 2.6 9.6" stroke="#e8f030" stroke-width="1.5" fill="none"/></svg>
<svg style="left:273.5px;top:617px;" width="21" height="21" viewBox="0 0 21 21"><rect x="4.4" y="5" width="15.6" height="15.4" fill="#f8f8f8" stroke="#444" stroke-width="0.6"/><path d="M5 12 L7 8 L8.6 11 L10.4 6.4 L12 11 L13.8 7.6 L15.4 11 L17.2 8.4 L19.4 12" stroke="#e01818" stroke-width="1.2" fill="none"/><path d="M5 13 H19.6" stroke="#2050d0" stroke-width="0.9" stroke-dasharray="1 0.8"/><path d="M6.4 14.6 V20 M9 14.6 V20 M11.6 14.6 V20 M14.2 14.6 V20 M16.8 14.6 V20" stroke="#222" stroke-width="1.6"/><path d="M12.4 4 L16.4 0.4 L20.6 4 L16.4 8Z" fill="#18a838" stroke="#0a5018" stroke-width="0.5"/><path d="M16.4 0.4 V8" stroke="#083810" stroke-width="0.7"/><path d="M0.4 5.4 L3 7.6 L9.6 1" stroke="#e89018" stroke-width="1.5" fill="none"/><path d="M1 4 L8 2.4" stroke="#222" stroke-width="0.8"/></svg>
<div class="a" style="left:302px;top:616px;width:50.7px;height:23px;background:linear-gradient(180deg,#46608c 0%,#364f7c 45%,#283f6a 55%,#2a4370 100%);border:1px solid #58749c;border-radius:2px;"></div>
<div class="a" style="left:352.7px;top:616px;width:50.3px;height:23px;background:linear-gradient(180deg,#46608c 0%,#364f7c 45%,#283f6a 55%,#2a4370 100%);border:1px solid #58749c;border-radius:2px;"></div>
<div class="a" style="left:306px;top:619px;width:18.5px;height:18.5px;background:radial-gradient(circle at 45% 40%,#b0f080 0%,#58d040 50%,#30a828 100%);border-radius:9.5px;border:1.6px solid #e8ffe0;"></div>
<svg style="left:309px;top:622.5px;" width="13" height="11" viewBox="0 0 13 11"><path d="M2 5.6 H10.8 Q10.8 1.6 6.6 1.6 Q2.6 1.8 2.4 5.8 Q2.6 9.8 6.6 9.8 Q9.6 9.8 10.6 7.4" stroke="#fff" stroke-width="2" fill="none"/></svg>
<svg style="left:305px;top:617px;" width="22" height="22" viewBox="0 0 22 22"><path d="M2.6 19 Q-0.6 11 9 3.4 Q14 0.4 17.4 1.6" stroke="#58c838" stroke-width="1.2" fill="none"/></svg>
<div class="a" style="left:358px;top:619px;width:18.5px;height:18.5px;background:radial-gradient(circle at 45% 40%,#b0f080 0%,#58d040 50%,#30a828 100%);border-radius:9.5px;border:1.6px solid #e8ffe0;"></div>
<svg style="left:361px;top:622.5px;" width="13" height="11" viewBox="0 0 13 11"><path d="M2 5.6 H10.8 Q10.8 1.6 6.6 1.6 Q2.6 1.8 2.4 5.8 Q2.6 9.8 6.6 9.8 Q9.6 9.8 10.6 7.4" stroke="#fff" stroke-width="2" fill="none"/></svg>
<svg style="left:357px;top:617px;" width="22" height="22" viewBox="0 0 22 22"><path d="M2.6 19 Q-0.6 11 9 3.4 Q14 0.4 17.4 1.6" stroke="#58c838" stroke-width="1.2" fill="none"/></svg>
<svg style="left:368px;top:627px;" width="10" height="11" viewBox="0 0 10 11"><path d="M3 0.5 H7 V4.6 H9.6 L5 9.6 L0.4 4.6 H3Z" fill="#38a0f0" stroke="#2070c0" stroke-width="0.5"/></svg>
<div class="t" id="k2" style="left:328px;top:622px;font-size:8.6px;line-height:10.6px;color:#fff;transform:scaleX(0.9302);">orig...</div>
<svg style="left:379.5px;top:622.5px;" width="15" height="9" viewBox="0 0 15 9"><path d="M0.4 0.8 H6.6 M3.4 0.8 V8.6 M3.8 3 L5.8 4.8" stroke="#fff" stroke-width="0.9" fill="none"/><path d="M8 1.6 H12 M10 0.2 V3 M8 3.4 H12.4 M8.4 5 H11.6 V7.6 H8.4Z M10 3.4 V8.8 M12.4 0.4 Q12.8 6 14.8 8.4 M14.6 2.4 L12 8.4 M13.6 0.6 L14.6 1.4" stroke="#fff" stroke-width="0.8" fill="none"/></svg>
<svg style="left:410px;top:617px;" width="21" height="21" viewBox="0 0 21 21"><path d="M2 8 L10 5.4 L19 8 V16.4 L10 20 L2 16.4Z" fill="#f09820" stroke="#c87010" stroke-width="0.6"/><path d="M2 8 L10 11 L19 8 M10 11 V20" stroke="#c87010" stroke-width="0.7" fill="none"/><path d="M2 8 L10 5.4 L19 8 L10 11Z" fill="#f8c040"/><path d="M11.6 12.4 V18 M11.6 15.4 L15.6 11.6 M12.6 15 L16 17.6" stroke="#e02010" stroke-width="1.6" fill="none"/><path d="M7 4.4 L9.4 1.4 L12.4 3.6 M9.4 1.4 V4.6" stroke="#30a0e8" stroke-width="1.2" fill="none"/></svg>
<div class="a" style="left:438.5px;top:616px;width:50.7px;height:23px;background:linear-gradient(180deg,#46608c 0%,#364f7c 45%,#283f6a 55%,#2a4370 100%);border:1px solid #58749c;border-radius:2px;"></div>
<div class="a" style="left:489.2px;top:616px;width:50.3px;height:23px;background:linear-gradient(180deg,#46608c 0%,#364f7c 45%,#283f6a 55%,#2a4370 100%);border:1px solid #58749c;border-radius:2px;"></div>
<svg style="left:443px;top:617.5px;" width="15" height="20" viewBox="0 0 15 20"><path d="M1 3 L7.4 0.6 V16.4 L1 19Z" fill="#e8d070" stroke="#a89030" stroke-width="0.5"/><path d="M3 4 L10 2 V17 L3 19.4Z" fill="#f4f0e0" stroke="#b8b090" stroke-width="0.4"/><path d="M4.6 5 L14 2.4 V17.4 L4.6 19.6Z" fill="#f4dc78" stroke="#b89838" stroke-width="0.6"/><path d="M4.6 5 L14 2.4 V8 L4.6 11Z" fill="#f8e89c"/></svg>
<svg style="left:494px;top:617.5px;" width="15" height="20" viewBox="0 0 15 20"><path d="M1 3 L7.4 0.6 V16.4 L1 19Z" fill="#e8d070" stroke="#a89030" stroke-width="0.5"/><path d="M3 4 L10 2 V17 L3 19.4Z" fill="#f4f0e0" stroke="#b8b090" stroke-width="0.4"/><path d="M4.6 5 L14 2.4 V17.4 L4.6 19.6Z" fill="#f4dc78" stroke="#b89838" stroke-width="0.6"/><path d="M4.6 5 L14 2.4 V8 L4.6 11Z" fill="#f8e89c"/></svg>
<div class="t" id="k3" style="left:465px;top:622px;font-size:8.6px;line-height:10.6px;color:#fff;transform:scaleX(0.8462);">Ferr...</div>
<div class="t" id="k4" style="left:516px;top:622px;font-size:8.6px;line-height:10.6px;color:#fff;transform:scaleX(0.8462);">Ferr...</div>
<div class="a" style="left:542px;top:616px;width:50px;height:23px;background:linear-gradient(180deg,#46608c 0%,#364f7c 45%,#283f6a 55%,#2a4370 100%);border:1px solid #58749c;border-radius:2px;"></div>
<div class="a" style="left:545.5px;top:617.5px;width:20.5px;height:20px;background:#f08020;border-radius:1px;"></div>
<svg style="left:545.5px;top:617.5px;" width="20.5" height="20" viewBox="0 0 20.5 20"><path d="M15.5 0 L20.5 5 V0Z" fill="#2a4474"/><path d="M15.5 0 V5 H20.5Z" fill="#f8b878"/><circle cx="9.6" cy="9" r="5" fill="none" stroke="#fff" stroke-width="2"/><path d="M9.6 9 H15 M9.6 9 L13 5" stroke="#fff" stroke-width="2"/><path d="M9.6 9 L16 10 L14 14Z" fill="#f08020"/></svg>
<div class="t" style="left:550.5px;top:631.5px;font-size:4.6px;line-height:6.6px;color:#fff;font-weight:bold;">PDF</div>
<div class="t" id="k5" style="left:569px;top:622px;font-size:8.6px;line-height:10.6px;color:#fff;transform:scaleX(0.8462);">Ferr...</div>
<svg style="left:603.5px;top:623px;" width="13" height="10.5" viewBox="0 0 13 10.5"><path d="M0.8 4.6 Q5 0 10 3.4 M2.4 7 Q5 4 8.2 6 M4.2 9 Q5.4 7.8 6.6 8.8" stroke="#40d828" stroke-width="1.6" fill="none"/><rect x="7.6" y="5.6" width="4.6" height="4.4" fill="none" stroke="#40d828" stroke-width="1"/></svg>
<svg style="left:624px;top:623px;" width="10" height="10" viewBox="0 0 10 10"><path d="M0.2 1.6 L4.4 1 V4.8 H0.2Z M5 0.9 L9.8 0.2 V4.8 H5Z M0.2 5.4 H4.4 V9.2 L0.2 8.6Z M5 5.4 H9.8 V10 L5 9.3Z" fill="#fff"/></svg>
<svg style="left:639px;top:622.5px;" width="10.5" height="11" viewBox="0 0 10.5 11"><circle cx="5.4" cy="3.4" r="2.8" fill="#e8b088"/><path d="M2.4 3 Q5.4 -1 8.4 3 Q5.4 1.6 2.4 3Z" fill="#888"/><path d="M0.6 10.6 Q0.8 6.4 5.4 6.4 Q10 6.4 10.2 10.6Z" fill="#40a098"/><path d="M4 6.6 L5.4 9 L6.8 6.6Z" fill="#fff"/></svg>
<svg style="left:653.5px;top:622.5px;" width="11" height="11.5" viewBox="0 0 11 11.5"><path d="M5.5 0.4 Q8 1.8 10.4 1.6 Q10.8 8 5.5 11 Q0.2 8 0.6 1.6 Q3 1.8 5.5 0.4Z" fill="#38b838" stroke="#e8f8e8" stroke-width="0.9"/><path d="M3.4 5.4 L5 7.2 L7.8 3.8" stroke="#fff" stroke-width="1.1" fill="none"/></svg>
<svg style="left:669px;top:622.5px;" width="10" height="11" viewBox="0 0 10 11"><ellipse cx="5" cy="5.6" rx="3.6" ry="4.6" fill="#222"/><ellipse cx="5" cy="6.6" rx="2.4" ry="3" fill="#fff"/><path d="M1.4 5.4 Q5 7.4 8.6 5.4 L8.6 7 Q5 8.8 1.4 7Z" fill="#e82020"/><path d="M2.6 10.6 H7.4" stroke="#f0a020" stroke-width="1.4"/><circle cx="4" cy="3" r="0.7" fill="#fff"/><circle cx="6" cy="3" r="0.7" fill="#fff"/></svg>
<svg style="left:684px;top:623px;" width="11" height="10" viewBox="0 0 11 10"><path d="M0.4 8.4 H1.8 V9.6 H0.4Z M2.6 6.8 H4 V9.6 H2.6Z M4.8 4.8 H6.2 V9.6 H4.8Z M7 2.6 H8.4 V9.6 H7Z M9.2 0.4 H10.6 V9.6 H9.2Z" fill="#fff"/><path d="M5 9.8 L7.4 5 L9.8 9.8Z" fill="#f0d020" stroke="#806000" stroke-width="0.4"/></svg>
<svg style="left:698.5px;top:622.5px;" width="11" height="11" viewBox="0 0 11 11"><circle cx="5.5" cy="5.5" r="5" fill="#d8d020" stroke="#f0f080" stroke-width="0.6"/><path d="M5.5 2.4 V8.6 M2.4 5.5 H8.6" stroke="#187818" stroke-width="2.2"/></svg>
<svg style="left:713.5px;top:623px;" width="10" height="10" viewBox="0 0 10 10"><path d="M0.4 3.4 H2.4 L5 1 V9 L2.4 6.6 H0.4Z" fill="#f0f0f0"/><path d="M6.2 3.4 Q7.2 5 6.2 6.6 M7.6 2.2 Q9.4 5 7.6 7.8" stroke="#e0e0e0" stroke-width="0.8" fill="none"/></svg>
<svg style="left:728.5px;top:623px;" width="10" height="10" viewBox="0 0 10 10"><path d="M1 0.6 V9.8" stroke="#fff" stroke-width="1"/><path d="M1.6 1 Q3.6 0 5.4 1.4 Q7.4 2.6 9.4 1.6 V6 Q7.4 7 5.4 5.8 Q3.6 4.6 1.6 5.6Z" fill="#fff"/></svg>
<div class="t" id="k6" style="left:757.4px;top:617.3px;font-size:8.5px;line-height:10.5px;color:#fff;transform:scaleX(0.9445);">21:27</div>
<div class="t" id="k7" style="left:748.6px;top:628.6px;font-size:8.5px;line-height:10.5px;color:#fff;transform:scaleX(0.9966);">2015/7/14</div>
<div class="a" style="left:792px;top:615px;width:8px;height:25px;background:linear-gradient(180deg,#5a7498 0%,#3a5480 50%,#2a426c 100%);border-left:1px solid #6a84a8;"></div>
</body>
</html>
